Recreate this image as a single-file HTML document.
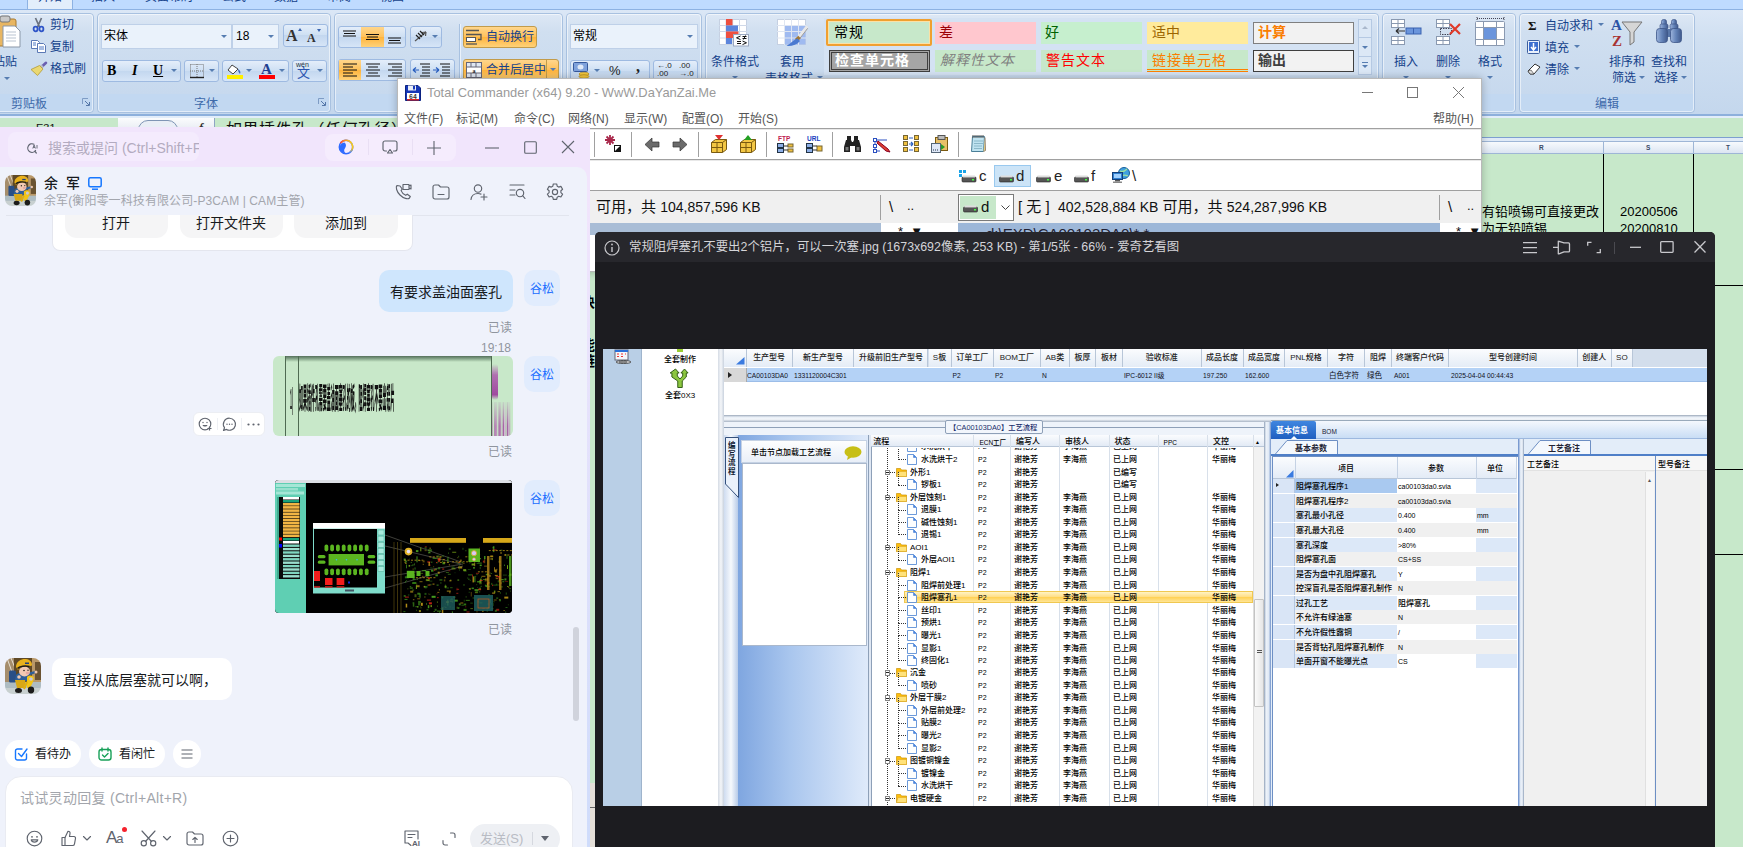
<!DOCTYPE html>
<html lang="zh-CN"><head><meta charset="utf-8"><title>desktop</title>
<style>
*{box-sizing:border-box}
html,body{margin:0;padding:0}
body{width:1743px;height:847px;overflow:hidden;position:relative;background:#c7e8ca;font-family:"Liberation Sans","Noto Sans CJK SC",sans-serif;font-size:12px;color:#000}
.a{position:absolute}
.t{position:absolute;white-space:nowrap;line-height:1}
svg{position:absolute;overflow:visible}
/* excel */
#xl{position:absolute;left:0;top:0;width:1743px;height:847px}
.rgrp{position:absolute;top:13px;height:100px;border:1px solid #a8c1e0;border-radius:4px;background:linear-gradient(#dde8f5 0,#d0dff0 18px,#c7d9ee 80px,#c2d8f1 80px,#c2d8f1 100%)}
.rgrp:after{content:"";position:absolute;left:0;right:0;top:0;bottom:0;border:1px solid rgba(255,255,255,.55);border-radius:3px}
.rlab{position:absolute;bottom:1.500px;left:0;right:0;text-align:center;color:#3e6aaa;font-size:12px;line-height:14px}
.rtx{position:absolute;white-space:nowrap;color:#15428b;font-size:12px;line-height:14px;margin-top:1px}
.rbtn{position:absolute;border:1px solid #9ebae1;border-radius:3px;background:linear-gradient(#e4eefa,#cddff3 50%,#c3d7ef 50%,#d6e5f7)}
.ron{background:linear-gradient(#ffd68c,#ffc15a 50%,#ffb33a 50%,#ffd27a)}
.dd{position:absolute;width:0;height:0;border-left:3px solid transparent;border-right:3px solid transparent;border-top:3px solid #567db1}
/* total commander */
#tc{position:absolute;left:397px;top:78px;width:1085px;height:194px;overflow:hidden;background:#fff;border:1px solid #b9b9b9;box-shadow:0 0 8px rgba(0,0,0,.25)}
#tc .m{position:absolute;top:33px;font-size:12px;color:#555;white-space:nowrap;line-height:14px}
#tc .sep{position:absolute;top:53px;width:1px;height:25px;background:#a0a0a0}
#tc .ico{position:absolute;top:56px}
#tc .dl{position:absolute;top:88px;font-size:15px;color:#222;line-height:18px}
#tc .pt{position:absolute;top:118px;font-size:15px;color:#111;line-height:20px;white-space:nowrap}
/* chat */
#chat{position:absolute;left:0;top:127px;width:590px;height:720px;background:linear-gradient(#f1e5fc 0,#f1e5fc 70px,#cfdcfb 100%);color:#171a1d}
#chat .panel{position:absolute;left:0;top:40px;width:587px;height:690px;background:#eff2fb;border-radius:0 10px 0 0}
#chat .gs{position:absolute;left:524px;width:36px;height:36px;border-radius:10px;background:#e1ecfd;color:#1a6dff;font-size:12px;line-height:38px;text-align:center}
#chat .rd{position:absolute;left:488px;font-size:12px;color:#8f959e;line-height:14px;white-space:nowrap}
#chat .pill{position:absolute;top:613px;height:28px;border-radius:14px;background:#fff}
#chat .ic{fill:none;stroke:#5f646e;stroke-width:1.15;stroke-linecap:round;stroke-linejoin:round}
/* viewer */
#vw{position:absolute;left:595px;top:232px;width:1120px;height:615px;background:#1c1c20;border-radius:5px 5px 0 0}
#vw .tb{position:absolute;left:0;top:0;width:1120px;height:30px;background:#27272c;border-radius:5px 5px 0 0}
#vw .wi{fill:none;stroke:#c8c8cc;stroke-width:1.3}
#img{position:absolute;left:8px;top:117px;width:1104px;height:457px;background:#fff;overflow:hidden;font-size:8px;color:#000;font-weight:500}
#img .t{font-size:8px;line-height:9px}
#img .h{position:absolute;top:0;height:18px;border-right:1px solid #b8c6d8;background:linear-gradient(#fbfcfe,#e4ecf6);text-align:center;font-size:8px;line-height:17px;white-space:nowrap;overflow:hidden;color:#222}
#img .tr{position:absolute;left:268px;width:382px;height:13px;white-space:nowrap}
#img .tr span{position:absolute;top:2px;font-size:8px;line-height:9px}
#img .gr{position:absolute;left:670px;width:244px;height:15px}
#img .gr span{position:absolute;top:3px;font-size:8px;line-height:9px;white-space:nowrap}
#tc .l{font-size:14px}

</style></head>
<body>
<div id="xl">
<!-- tab strip -->
<div class="a" style="left:0;top:0;width:1743px;height:10px;background:#bfdbff"></div>
<div class="a" style="left:27px;top:-14px;width:46px;height:24px;border:1px solid #8db2e3;border-bottom:0;border-radius:3px 3px 0 0;background:#e3eefb"></div>
<div class="t" style="left:38px;top:-9px;font-size:12px;color:#15428b">开始</div>
<div class="t" style="left:91px;top:-9px;font-size:12px;color:#15428b">插入</div>
<div class="t" style="left:145px;top:-9px;font-size:12px;color:#15428b">页面布局</div>
<div class="t" style="left:222px;top:-9px;font-size:12px;color:#15428b">公式</div>
<div class="t" style="left:274px;top:-9px;font-size:12px;color:#15428b">数据</div>
<div class="t" style="left:327px;top:-9px;font-size:12px;color:#15428b">审阅</div>
<div class="t" style="left:380px;top:-9px;font-size:12px;color:#15428b">视图</div>
<!-- ribbon body -->
<div class="a" style="left:0;top:9px;width:1743px;height:105px;background:linear-gradient(#dbe7f6,#cfdff1 30%,#c4d7ed 100%);border-top:1px solid #8db2e3"></div>

<!-- group: clipboard -->
<div class="rgrp" style="left:-6px;width:100px"><div class="rlab" style="left:0;right:30px">剪贴板</div>
 <svg style="left:87px;top:84px" width="9" height="9" viewBox="0 0 9 9"><path d="M0.5 6V0.5H6" fill="none" stroke="#7e9cc5"/><path d="M3 3l4 4M7.5 4v3.5H4" fill="none" stroke="#5577a8"/></svg>
</div>
<!-- paste icon -->
<svg style="left:-6px;top:16px" width="28" height="32" viewBox="0 0 28 32"><rect x="0" y="3" width="22" height="27" rx="2" fill="#e8b662" stroke="#a97a2f"/><rect x="6" y="0" width="10" height="6" rx="2" fill="#c9c9c9" stroke="#777"/><path d="M9 10h12l5 5v16H9z" fill="#fff" stroke="#8a97a8"/><path d="M12 16h10M12 19h10M12 22h10M12 25h10" stroke="#b9c3d0"/></svg>
<div class="rtx" style="left:-7px;top:54px">粘贴</div>
<div class="dd" style="left:4px;top:77px"></div>
<!-- cut copy brush -->
<svg style="left:33px;top:18px" width="11" height="14" viewBox="0 0 11 14"><path d="M2.500 0l4 9M8.500 0l-4 9" stroke="#6b7280" stroke-width="1.700" fill="none"/><ellipse cx="2.600" cy="11" rx="2" ry="2.300" fill="none" stroke="#2f55c8" stroke-width="1.800"/><ellipse cx="8.400" cy="11" rx="2" ry="2.300" fill="none" stroke="#2f55c8" stroke-width="1.800"/></svg>
<div class="rtx" style="left:50px;top:17px">剪切</div>
<svg style="left:31px;top:40px" width="16" height="13" viewBox="0 0 16 13"><path d="M0.5 0.5h6l2 2v6h-8z" fill="#fff" stroke="#5b79b5"/><path d="M6.500 3.500h6l2 2v7h-8z" fill="#fff" stroke="#5b79b5"/><path d="M2 3h3M2 5h3M8 7h5M8 9h5" stroke="#4f78c4"/></svg>
<div class="rtx" style="left:50px;top:39px">复制</div>
<svg style="left:31px;top:62px" width="16" height="14" viewBox="0 0 16 14"><path d="M15 .8L10.500 5" stroke="#6a5fb0" stroke-width="2.600" stroke-linecap="round"/><path d="M11.500 3.500l-2.500 2.500" stroke="#b8bcc8" stroke-width="3.200"/><path d="M8.500 3.500l3.500 3.500-5.500 6.500L0 7.500z" fill="#ead872" stroke="#b39a36" stroke-width=".8"/></svg>
<div class="rtx" style="left:50px;top:61px">格式刷</div>

<!-- group: font -->
<div class="rgrp" style="left:97px;width:234px"><div class="rlab" style="right:16px">字体</div>
 <svg style="left:220px;top:84px" width="9" height="9" viewBox="0 0 9 9"><path d="M0.5 6V0.5H6" fill="none" stroke="#7e9cc5"/><path d="M3 3l4 4M7.5 4v3.5H4" fill="none" stroke="#5577a8"/></svg>
</div>
<div class="a" style="left:101px;top:24px;width:131px;height:25px;background:#eaf2fb;border:1px solid #bed0e8"></div>
<div class="a" style="left:232px;top:24px;width:47px;height:25px;background:#eaf2fb;border:1px solid #bed0e8"></div>
<div class="t" style="left:104px;top:30px;font-size:12px">宋体</div>
<div class="dd" style="left:221px;top:35px"></div>
<div class="t" style="left:236px;top:30px;font-size:12px">18</div>
<div class="dd" style="left:268px;top:35px"></div>
<div class="rbtn" style="left:283px;top:24px;width:45px;height:23px"></div>
<div class="t" style="left:286px;top:27px;font:bold 16px 'Liberation Serif',serif;color:#333">A</div>
<div class="t" style="left:307px;top:31px;font:bold 12px 'Liberation Serif',serif;color:#333">A</div>
<div class="a" style="left:298px;top:28px;border-left:2.5px solid transparent;border-right:2.5px solid transparent;border-bottom:3px solid #3c66b0"></div>
<div class="a" style="left:317px;top:29px;border-left:2.5px solid transparent;border-right:2.5px solid transparent;border-top:3px solid #3c66b0"></div>
<div class="rbtn" style="left:102px;top:60px;width:79px;height:22px"></div>
<div class="t" style="left:107px;top:63px;font:bold 14px 'Liberation Serif',serif">B</div>
<div class="t" style="left:132px;top:63px;font:italic bold 14px 'Liberation Serif',serif">I</div>
<div class="t" style="left:153px;top:63px;font:bold 14px 'Liberation Serif',serif;text-decoration:underline">U</div>
<div class="dd" style="left:171px;top:69px"></div>
<div class="rbtn" style="left:184px;top:60px;width:35px;height:22px"></div>
<svg style="left:190px;top:64px" width="14" height="14" viewBox="0 0 14 14"><path d="M0.5 0.500h13v13M0.500 0.500v13M7 0v13M0 7h13" stroke="#777" stroke-dasharray="1 1" fill="none"/><path d="M0 13.500h14" stroke="#222" stroke-width="1.400"/></svg>
<div class="dd" style="left:209px;top:69px"></div>
<div class="rbtn" style="left:222px;top:60px;width:67px;height:22px"></div>
<svg style="left:227px;top:62px" width="16" height="17" viewBox="0 0 16 17"><path d="M5 3l6 4-5 5-5-4z" fill="#fff" stroke="#444"/><path d="M11 7c2 1 3 3 2 5-1-1-2-3-2-5z" fill="#3a67c0"/><rect x="0" y="13" width="16" height="4" fill="#ffef00"/></svg>
<div class="dd" style="left:246px;top:69px"></div>
<div class="t" style="left:261px;top:61px;font:bold 15px 'Liberation Serif',serif;color:#1f3f8f">A</div>
<div class="a" style="left:259px;top:75px;width:16px;height:4px;background:#f00"></div>
<div class="dd" style="left:279px;top:69px"></div>
<div class="rbtn" style="left:292px;top:60px;width:35px;height:22px"></div>
<div class="t" style="left:296px;top:61px;font-size:7px;color:#234">wén</div>
<div class="t" style="left:297px;top:66px;font-size:13px;color:#2a55b0">文</div>
<div class="dd" style="left:317px;top:69px"></div>

<!-- group: alignment -->
<div class="rgrp" style="left:334px;width:229px"></div>
<div class="rbtn" style="left:338px;top:26px;width:68px;height:22px"></div>
<div class="a ron" style="left:361px;top:27px;width:23px;height:20px"></div>
<svg style="left:343px;top:30px" width="60" height="14" viewBox="0 0 60 14"><path d="M0 1h13M1 3.500h11M0 6h13" stroke="#111" stroke-width="1.200"/><path d="M23 4.500h13M24 7h11M23 9.500h13" stroke="#111" stroke-width="1.200"/><path d="M45 8h13M46 10.500h11M45 13h13" stroke="#111" stroke-width="1.200"/></svg>
<div class="rbtn" style="left:410px;top:26px;width:32px;height:22px"></div>
<svg style="left:414px;top:29px" width="16" height="16" viewBox="0 0 16 16"><path d="M1 12L12 3M12 3l-4 .5M12 3l-.5 4" stroke="#555" fill="none" stroke-width="1.200"/><path d="M2 6l4 4M4 4l4 4M6 2l4 4" stroke="#222" stroke-width="1.200"/></svg>
<div class="dd" style="left:432px;top:35px"></div>
<div class="a" style="left:459px;top:24px;width:1px;height:58px;background:#a8c1e0"></div>
<div class="a" style="left:460px;top:24px;width:1px;height:58px;background:#eaf2fb"></div>
<div class="rbtn ron" style="left:463px;top:26px;width:74px;height:22px;border-color:#c29b4a"></div>
<svg style="left:466px;top:29px" width="17" height="16" viewBox="0 0 17 16"><path d="M0 1.500h13M0 5.500h15v5h-3" stroke="#555" fill="none" stroke-width="1.300"/><rect x="0.500" y="8.500" width="9" height="4" fill="#fff" stroke="#555"/><path d="M0 15h11" stroke="#555" stroke-width="1.300"/></svg>
<div class="rtx" style="left:486px;top:29px">自动换行</div>
<div class="rbtn" style="left:338px;top:59px;width:68px;height:22px"></div>
<div class="a ron" style="left:339px;top:60px;width:22px;height:20px"></div>
<svg style="left:343px;top:63px" width="60" height="14" viewBox="0 0 60 14"><path d="M0 1h14M0 4h10M0 7h14M0 10h10M0 13h14" stroke="#111" stroke-width="1.200"/><path d="M23 1h14M25 4h10M23 7h14M25 10h10M23 13h14" stroke="#111" stroke-width="1.200"/><path d="M45 1h14M49 4h10M45 7h14M49 10h10M45 13h14" stroke="#111" stroke-width="1.200"/></svg>
<div class="rbtn" style="left:410px;top:59px;width:45px;height:22px"></div>
<svg style="left:413px;top:63px" width="40" height="14" viewBox="0 0 40 14"><path d="M7 1h10M9 4h8M9 7h8M9 10h8M7 13h10" stroke="#111" stroke-width="1.200"/><path d="M0 7h6M0 7l3-2.500M0 7l3 2.500" stroke="#2a5fc0" stroke-width="1.200" fill="none"/><path d="M27 1h10M29 4h8M29 7h8M29 10h8M27 13h10" stroke="#111" stroke-width="1.200"/><path d="M20 7h6M26 7l-3-2.500M26 7l-3 2.500" stroke="#2a5fc0" stroke-width="1.200" fill="none"/></svg>
<div class="rbtn ron" style="left:463px;top:59px;width:96px;height:22px;border-color:#c29b4a"></div>
<svg style="left:466px;top:62px" width="16" height="16" viewBox="0 0 16 16"><rect x="0.500" y="0.500" width="15" height="15" fill="#dfe7f3" stroke="#667"/><rect x="0.500" y="5" width="15" height="6" fill="#fff" stroke="#667"/><path d="M5 0v5M10 0v5M5 11v5M10 11v5" stroke="#667"/><text x="8" y="10.500" font-size="6" font-weight="bold" text-anchor="middle" font-family="Liberation Serif,serif" fill="#222">a</text></svg>
<div class="rtx" style="left:486px;top:62px">合并后居中</div>
<div class="a" style="left:546px;top:60px;width:1px;height:20px;background:#c29b4a"></div>
<div class="dd" style="left:550px;top:68px"></div>

<!-- group: number -->
<div class="rgrp" style="left:566px;width:136px"></div>
<div class="a" style="left:570px;top:24px;width:128px;height:25px;background:#eaf2fb;border:1px solid #bed0e8"></div>
<div class="t" style="left:573px;top:30px;font-size:12px">常规</div>
<div class="dd" style="left:687px;top:35px"></div>
<div class="rbtn" style="left:570px;top:60px;width:80px;height:22px"></div>
<svg style="left:573px;top:62px" width="18" height="18" viewBox="0 0 18 18"><rect x="0.500" y="0.500" width="14" height="9" rx="1" fill="#7fa2dc" stroke="#35589b"/><ellipse cx="7.500" cy="5" rx="3" ry="2.500" fill="#dfe9f8"/><ellipse cx="11" cy="12" rx="5" ry="1.800" fill="#f2c63c" stroke="#a87e12" stroke-width=".6"/><ellipse cx="11" cy="14.500" rx="5" ry="1.800" fill="#f2c63c" stroke="#a87e12" stroke-width=".6"/></svg>
<div class="dd" style="left:594px;top:69px"></div>
<div class="t" style="left:609px;top:64px;font-size:13px;color:#222">%</div>
<div class="t" style="left:636px;top:58px;font:bold 16px 'Liberation Serif',serif;color:#222">,</div>
<div class="rbtn" style="left:653px;top:60px;width:45px;height:22px"></div>
<div class="t" style="left:657px;top:62px;font-size:8px;color:#222;line-height:8px">←.0<br>.00</div>
<div class="t" style="left:679px;top:62px;font-size:8px;color:#222;line-height:8px">.00<br>→.0</div>

<!-- group: styles -->
<div class="rgrp" style="left:705px;width:674px"></div>
<svg style="left:719px;top:19px" width="31" height="28" viewBox="0 0 31 28"><rect x="0.500" y="0.500" width="27" height="25" fill="#fff" stroke="#c5d0e2"/><path d="M7 0v26M13.700 0v26M20.500 0v26M0 6.500h28M0 12.500h28M0 19h28" stroke="#cfd8e8" stroke-width="1"/><rect x="7" y="0" width="6.500" height="6.500" fill="#ee4f3f"/><rect x="7" y="6.500" width="12" height="6" fill="#5c85dc"/><rect x="7" y="12.500" width="12.500" height="6.500" fill="#ee4f3f"/><rect x="7" y="19" width="6" height="6" fill="#5c85dc"/><rect x="14.500" y="15.500" width="15" height="11.500" fill="#fbfcfe" stroke="#9aa8c0"/><path d="M21.500 17l-4 1.800 4 1.800M18 22.500h4M18 24.500h4M23.500 22l4 1.800-4 1.800M23.500 17.500h4M23.500 19.500h4M26.500 16.500l-2 4" stroke="#111" fill="none" stroke-width="1"/></svg>
<div class="rtx" style="left:711px;top:54px">条件格式</div>
<div class="dd" style="left:732px;top:76px"></div>
<svg style="left:777px;top:19px" width="32" height="28" viewBox="0 0 32 28"><rect x="0.500" y="0.500" width="28" height="25" fill="#fff" stroke="#c5d0e2"/><rect x="7.500" y="6.500" width="21" height="19" fill="#9fbaf0"/><path d="M7.500 0v26M14.500 0v26M21.500 0v26M0 6.500h29M0 12.500h29M0 19h29" stroke="#dfe6f2" stroke-width="1"/><path d="M29.500 8.500L21 19.500" stroke="#e8e8e8" stroke-width="3.200" stroke-linecap="round"/><path d="M29.500 8.500L21 19.500" stroke="#9a9a9a" stroke-width="1" transform="translate(1.200,.8)"/><path d="M22.500 18l-3.300 3.300" stroke="#a07838" stroke-width="3.600"/><path d="M20.500 19.500c-3.500 1-6 4.500-11 7.500 5 .5 10.500-1 13.500-5z" fill="#4a79d0"/></svg>
<div class="rtx" style="left:780px;top:54px">套用</div>
<div class="rtx" style="left:765px;top:71px">表格格式</div>
<div class="dd" style="left:817px;top:76px"></div>
<!-- gallery -->
<div class="a" style="left:824px;top:18px;width:535px;height:57px;background:#d4e2f3"></div>
<div class="a" style="left:935px;top:50px;width:101px;height:22px;background:#c7e8ca"></div>
<div class="a" style="left:1041px;top:50px;width:101px;height:22px;background:#c7e8ca"></div>
<div class="a" style="left:1147px;top:50px;width:101px;height:22px;background:#c7e8ca"></div>
<div class="a" style="left:826px;top:19px;width:106px;height:27px;border:2px solid #f0a030;border-radius:2px;background:#c7e8ca;box-shadow:inset 0 0 0 1px #fbe1a6"></div>
<div class="t" style="left:834px;top:25px;font-size:14px;color:#000;letter-spacing:1px">常规</div>
<div class="a" style="left:935px;top:22px;width:101px;height:22px;background:#ffc7ce"></div>
<div class="t" style="left:939px;top:25px;font-size:14px;color:#9c0006">差</div>
<div class="a" style="left:1041px;top:22px;width:101px;height:22px;background:#c6efce"></div>
<div class="t" style="left:1045px;top:25px;font-size:14px;color:#006100">好</div>
<div class="a" style="left:1147px;top:22px;width:101px;height:22px;background:#ffeb9c"></div>
<div class="t" style="left:1152px;top:25px;font-size:14px;color:#9c6500">适中</div>
<div class="a" style="left:1253px;top:22px;width:101px;height:22px;background:#f2f2f2;border:1px solid #7f7f7f"></div>
<div class="t" style="left:1258px;top:25px;font-size:14px;color:#fa7d00;font-weight:bold">计算</div>
<div class="a" style="left:829px;top:50px;width:101px;height:22px;background:#a5a5a5;border:3px double #3f3f3f"></div>
<div class="t" style="left:835px;top:53px;font-size:14px;color:#fff;font-weight:bold;letter-spacing:1px">检查单元格</div>
<div class="t" style="left:940px;top:53px;font-size:14px;color:#7f7f7f;font-style:italic;letter-spacing:1px">解释性文本</div>
<div class="t" style="left:1046px;top:53px;font-size:14px;color:#f00;letter-spacing:1px">警告文本</div>
<div class="t" style="left:1152px;top:53px;font-size:14px;color:#fa7d00;letter-spacing:1px">链接单元格</div>
<div class="a" style="left:1147px;top:69px;width:101px;height:3px;border-top:1px solid #ff8001;border-bottom:1px solid #ff8001"></div>
<div class="a" style="left:1253px;top:50px;width:101px;height:22px;background:#f2f2f2;border:1px solid #3f3f3f"></div>
<div class="t" style="left:1258px;top:53px;font-size:14px;color:#3f3f3f;font-weight:bold">输出</div>
<div class="a" style="left:1358px;top:19px;width:14px;height:56px;border:1px solid #b5c9e3;background:#dce8f6"></div>
<div class="a" style="left:1358px;top:37px;width:14px;height:1px;background:#b5c9e3"></div>
<div class="a" style="left:1358px;top:56px;width:14px;height:1px;background:#b5c9e3"></div>
<div class="a" style="left:1362px;top:26px;border-left:3px solid transparent;border-right:3px solid transparent;border-bottom:3px solid #a9b8cc"></div>
<div class="dd" style="left:1362px;top:46px"></div>
<div class="a" style="left:1362px;top:62px;width:6px;height:1px;background:#567db1"></div>
<div class="dd" style="left:1362px;top:65px"></div>

<!-- group: cells -->
<div class="rgrp" style="left:1382px;width:134px"></div>
<svg style="left:1391px;top:19px" width="31" height="27" viewBox="0 0 31 27"><rect x="0.500" y="0.500" width="13" height="8" fill="#fff" stroke="#8a99b0"/><path d="M7 0v9M0 4.500h14" stroke="#8a99b0"/><rect x="0.500" y="17.500" width="13" height="8" fill="#fff" stroke="#8a99b0"/><path d="M7 17v9M0 21.500h14" stroke="#8a99b0"/><rect x="15" y="9" width="15" height="6" fill="#6b95dc" stroke="#3a62b0"/><path d="M22.500 9v6" stroke="#3a62b0"/><path d="M5 12h9M5 12l3-2.500M5 12l3 2.500" stroke="#333" fill="none" stroke-width="1.200"/></svg>
<div class="rtx" style="left:1394px;top:54px">插入</div>
<div class="dd" style="left:1403px;top:76px"></div>
<svg style="left:1436px;top:19px" width="26" height="27" viewBox="0 0 26 27"><rect x="0.500" y="0.500" width="13" height="8" fill="#fff" stroke="#8a99b0"/><path d="M7 0v9M0 4.500h14" stroke="#8a99b0"/><rect x="0.500" y="17.500" width="13" height="8" fill="#fff" stroke="#8a99b0"/><path d="M7 17v9M0 21.500h14" stroke="#8a99b0"/><rect x="4.500" y="9.500" width="11" height="6" fill="none" stroke="#445" stroke-dasharray="1.500 1"/><path d="M14 5l10 10M24 5L14 15" stroke="#e03a2a" stroke-width="2.200"/></svg>
<div class="rtx" style="left:1436px;top:54px">删除</div>
<div class="dd" style="left:1445px;top:76px"></div>
<svg style="left:1475px;top:17px" width="31" height="30" viewBox="0 0 31 30"><path d="M2 1.500h27M2 0v3M29 0v3" stroke="#445" stroke-dasharray="1 1"/><rect x="0.500" y="4.500" width="29" height="24" rx="1" fill="#fff" stroke="#8a99b0"/><path d="M8.500 4v25M21.500 4v25M0 10.500h30M0 22.500h30" stroke="#8a99b0"/><rect x="9" y="11" width="12" height="11" fill="#6b95dc"/></svg>
<div class="rtx" style="left:1478px;top:54px">格式</div>
<div class="dd" style="left:1487px;top:76px"></div>

<!-- group: edit -->
<div class="rgrp" style="left:1519px;width:176px"><div class="rlab">编辑</div></div>
<div class="t" style="left:1528px;top:18px;font:bold 13px 'Liberation Serif',serif;color:#111">Σ</div>
<div class="rtx" style="left:1545px;top:18px">自动求和</div>
<div class="dd" style="left:1598px;top:23px"></div>
<svg style="left:1527px;top:40px" width="13" height="14" viewBox="0 0 13 14"><rect x="0.500" y="0.500" width="12" height="13" rx="1" fill="#e9f0fb" stroke="#3c5f9f"/><rect x="2" y="2" width="9" height="9" fill="#3d6fd0"/><path d="M6.500 3v6M4 7l2.500 3L9 7" stroke="#fff" fill="none" stroke-width="1.500"/></svg>
<div class="rtx" style="left:1545px;top:40px">填充</div>
<div class="dd" style="left:1574px;top:45px"></div>
<svg style="left:1527px;top:63px" width="14" height="12" viewBox="0 0 14 12"><path d="M1 8l7-7 5 3-6 7H3z" fill="#fff" stroke="#333"/><path d="M1 8l2 3h4l-3-4z" fill="#ddd" stroke="#333" stroke-width=".6"/></svg>
<div class="rtx" style="left:1545px;top:62px">清除</div>
<div class="dd" style="left:1574px;top:67px"></div>
<svg style="left:1611px;top:17px" width="32" height="30" viewBox="0 0 32 30"><text x="0" y="13" font-family="Liberation Serif,serif" font-weight="bold" font-size="15" fill="#2b53a5">A</text><text x="1" y="29" font-family="Liberation Serif,serif" font-weight="bold" font-size="15" fill="#a83232">Z</text><path d="M11 5h20l-8 10v10l-4 3V15z" fill="#d6d6d6" stroke="#777"/></svg>
<div class="rtx" style="left:1609px;top:54px">排序和</div>
<div class="rtx" style="left:1612px;top:70px">筛选</div>
<div class="dd" style="left:1639px;top:76px"></div>
<svg style="left:1655px;top:19px" width="28" height="26" viewBox="0 0 28 26"><defs><linearGradient id="bn" x1="0" y1="0" x2="1" y2="0"><stop offset="0" stop-color="#9db4dc"/><stop offset=".5" stop-color="#6383b8"/><stop offset="1" stop-color="#40598c"/></linearGradient></defs><rect x="6.500" y="0.500" width="5" height="6" rx="2" fill="url(#bn)" stroke="#3c5588" stroke-width=".7"/><rect x="16.500" y="0.500" width="5" height="6" rx="2" fill="url(#bn)" stroke="#3c5588" stroke-width=".7"/><rect x="5" y="5" width="8" height="5" rx="1.500" fill="url(#bn)" stroke="#3c5588" stroke-width=".7"/><rect x="15" y="5" width="8" height="5" rx="1.500" fill="url(#bn)" stroke="#3c5588" stroke-width=".7"/><rect x="11" y="10" width="6" height="8" fill="#5876a8"/><rect x="1.500" y="9.500" width="11" height="14" rx="3" fill="url(#bn)" stroke="#3c5588" stroke-width=".8"/><rect x="15.500" y="9.500" width="11" height="14" rx="3" fill="url(#bn)" stroke="#3c5588" stroke-width=".8"/></svg>
<div class="rtx" style="left:1651px;top:54px">查找和</div>
<div class="rtx" style="left:1654px;top:70px">选择</div>
<div class="dd" style="left:1681px;top:76px"></div>

<!-- formula bar row -->
<div class="a" style="left:0;top:114px;width:1743px;height:2px;background:#8db0dc"></div>
<div class="a" style="left:0;top:116px;width:1743px;height:2px;background:#e2edfa"></div>
<div class="a" style="left:0;top:118px;width:1743px;height:20px;background:#c7e8ca"></div>
<div class="a" style="left:118px;top:118px;width:97px;height:14px;background:linear-gradient(#fbfcfd,#e4e9f1)"></div>
<div class="a" style="left:138px;top:120px;width:40px;height:20px;border:1px solid #7f95b5;border-radius:10px;background:#e9eef6"></div>
<div class="t" style="left:36px;top:123px;font-size:11px;color:#111">E31</div>
<div class="t" style="left:199px;top:121px;font:italic bold 12px 'Liberation Serif',serif;color:#333">f</div>
<div class="a" style="left:214px;top:118px;width:1px;height:14px;background:#8fa5c4"></div>
<div class="t" style="left:226px;top:122px;font-size:16px;color:#111;letter-spacing:.5px">如果插件孔（任何孔径）处</div>

<!-- sheet right side -->
<div class="a" style="left:1481px;top:137px;width:262px;height:1px;background:#7d9fd0"></div>
<div class="a" style="left:1481px;top:138px;width:262px;height:3px;background:#dfeaf7"></div>
<div class="a" style="left:1481px;top:141px;width:262px;height:13px;background:linear-gradient(#f7fafd,#dbe5f2);border-top:1px solid #9eb6d6;border-bottom:1px solid #9eb6d6"></div>
<div class="t" style="left:1539px;top:145px;font-size:6.500px;color:#3a4a66;font-weight:bold">R</div>
<div class="t" style="left:1646px;top:145px;font-size:6.500px;color:#3a4a66;font-weight:bold">S</div>
<div class="t" style="left:1726px;top:145px;font-size:6.500px;color:#3a4a66;font-weight:bold">T</div>
<div class="a" style="left:1603px;top:141px;width:1px;height:13px;background:#9eb6d6"></div>
<div class="a" style="left:1693px;top:141px;width:1px;height:13px;background:#9eb6d6"></div>
<div class="a" style="left:1603px;top:154px;width:1px;height:693px;background:#000"></div>
<div class="a" style="left:1693px;top:154px;width:1px;height:693px;background:#000"></div>
<div class="a" style="left:1481px;top:285px;width:262px;height:1px;background:#000"></div>
<div class="a" style="left:1481px;top:469px;width:262px;height:1px;background:#000"></div>
<div class="a" style="left:1481px;top:554px;width:262px;height:1px;background:#000"></div>
<div class="t" style="left:1482px;top:205px;font-size:13px;color:#000">有铅喷锡可直接更改</div>
<div class="t" style="left:1482px;top:222px;font-size:13px;color:#000">为无铅喷锡</div>
<div class="t" style="left:1620px;top:205px;font-size:13px;color:#000">20200506</div>
<div class="t" style="left:1620px;top:222px;font-size:13px;color:#000">20200810</div>
<!-- left strip between chat and viewer -->
<div class="a" style="left:590px;top:290px;width:6px;height:80px;overflow:hidden"><div class="t" style="left:-9px;top:5px;font-size:14px;font-weight:bold">块</div><div class="t" style="left:-9px;top:48px;font-size:14px;font-weight:bold">能</div><div class="t" style="left:-9px;top:64px;font-size:14px;font-weight:bold">链</div></div>
<div class="a" style="left:590px;top:783px;width:6px;height:64px;background:#e4dfd8"></div>
<div class="a" style="left:590px;top:807px;width:6px;height:1px;background:#666"></div>
</div>
<div id="tc">
<svg style="left:7px;top:6px" width="16" height="16" viewBox="0 0 16 16"><path d="M0.500 0.500h12.500l2.500 2.500v12.500h-15z" fill="#1637b8" stroke="#0b2280"/><rect x="3" y="0.500" width="8" height="5" fill="#e9eef8"/><rect x="8" y="1" width="2" height="3.500" fill="#1637b8"/><rect x="2" y="8" width="12" height="7" fill="#fff"/><rect x="2" y="14" width="12" height="1.500" fill="#d22"/><text x="8" y="13.500" font-size="6.500" font-weight="bold" text-anchor="middle" font-family="Liberation Mono,monospace" fill="#333">64</text></svg>
<div class="t" style="left:29px;top:8px;font-size:12.900px;color:#9a9a9a">Total Commander (x64) 9.20 - WwW.DaYanZai.Me</div>
<svg style="left:964px;top:13px" width="11" height="1" viewBox="0 0 11 1"><path d="M0 .5h11" stroke="#777"/></svg>
<svg style="left:1009px;top:8px" width="11" height="11" viewBox="0 0 11 11"><rect x=".5" y=".5" width="10" height="10" fill="none" stroke="#777"/></svg>
<svg style="left:1055px;top:8px" width="11" height="11" viewBox="0 0 11 11"><path d="M0 0l11 11M11 0L0 11" stroke="#777"/></svg>
<div class="m" style="left:6px">文件(F)</div>
<div class="m" style="left:58px">标记(M)</div>
<div class="m" style="left:116px">命令(C)</div>
<div class="m" style="left:170px">网络(N)</div>
<div class="m" style="left:226px">显示(W)</div>
<div class="m" style="left:284px">配置(O)</div>
<div class="m" style="left:340px">开始(S)</div>
<div class="m" style="left:1035px">帮助(H)</div>
<div class="a" style="left:0;top:49px;width:1083px;height:1px;background:#a0a0a0"></div>
<div class="a" style="left:0;top:50px;width:1083px;height:1px;background:#e8e8e8"></div>
<!-- toolbar -->
<div class="sep" style="left:196px"></div>
<svg class="ico" style="left:207px" width="16" height="18" viewBox="0 0 16 18"><path d="M5 0v10M0 5h10M1.500 1.500l7 7M8.500 1.500l-7 7" stroke="#a8274a" stroke-width="1.800"/><rect x="9.500" y="10.500" width="6" height="6" fill="#fff" stroke="#111"/><path d="M10 16l5-5v5z" fill="#111"/></svg>
<div class="sep" style="left:233px"></div>
<svg class="ico" style="left:247px;top:59px" width="14" height="13" viewBox="0 0 14 13"><path d="M0 6.500L7 0v4h7v5H7v4z" fill="#6b6b6b" stroke="#333" stroke-width=".7"/></svg>
<svg class="ico" style="left:275px;top:59px" width="14" height="13" viewBox="0 0 14 13"><path d="M14 6.500L7 0v4H0v5h7v4z" fill="#6b6b6b" stroke="#333" stroke-width=".7"/></svg>
<div class="sep" style="left:300px"></div>
<svg class="ico" style="left:313px" width="16" height="18" viewBox="0 0 16 18"><path d="M0.500 7.500l4-3h11v10l-4 3h-11z" fill="#f3c744" stroke="#7a5a10"/><path d="M0.500 7.500h11v10M11.500 7.500l4-3M6 7.500v10M0.500 12.500h11" stroke="#7a5a10" fill="none"/><path d="M4 0h8l-4 5z" fill="#e03030"/></svg>
<svg class="ico" style="left:342px" width="16" height="18" viewBox="0 0 16 18"><path d="M0.500 7.500l4-3h11v10l-4 3h-11z" fill="#f3c744" stroke="#7a5a10"/><path d="M0.500 7.500h11v10M11.500 7.500l4-3M6 7.500v10M0.500 12.500h11" stroke="#7a5a10" fill="none"/><path d="M4 5h8L8 0z" fill="#22a022"/></svg>
<div class="sep" style="left:368px"></div>
<svg class="ico" style="left:379px" width="18" height="18" viewBox="0 0 18 18"><text x="1" y="6" font-size="6.500" font-weight="bold" font-family="Liberation Sans,sans-serif" fill="#c02050">FTP</text><rect x="0.500" y="8.500" width="6" height="4" fill="#8fb0e8" stroke="#234"/><rect x="0.500" y="13.500" width="6" height="4" fill="#8fb0e8" stroke="#234"/><rect x="11" y="9" width="5" height="3" fill="#f0c040" stroke="#763"/><rect x="11" y="14" width="5" height="3" fill="#f0c040" stroke="#763"/><path d="M7 11h4M7 15h4" stroke="#333"/></svg>
<svg class="ico" style="left:408px" width="18" height="18" viewBox="0 0 18 18"><text x="1" y="6" font-size="6.500" font-weight="bold" font-family="Liberation Sans,sans-serif" fill="#2040c0">URL</text><rect x="0.500" y="8.500" width="6" height="4" fill="#8fb0e8" stroke="#234"/><rect x="0.500" y="13.500" width="6" height="4" fill="#8fb0e8" stroke="#234"/><rect x="11" y="11" width="5" height="5" fill="#f0c040" stroke="#763"/><path d="M7 11h4M7 15h4" stroke="#333"/></svg>
<div class="sep" style="left:434px"></div>
<svg class="ico" style="left:446px;top:57px" width="17" height="16" viewBox="0 0 17 16"><rect x="3" y="0" width="4" height="5" fill="#222"/><rect x="10" y="0" width="4" height="5" fill="#222"/><path d="M2 4h5l1 2h1l1-2h5l2 7v5h-6v-6H6v6H0v-5z" fill="#222"/><rect x="1.500" y="11" width="3" height="3.500" fill="#777"/><rect x="12.500" y="11" width="3" height="3.500" fill="#777"/></svg>
<svg class="ico" style="left:475px" width="18" height="18" viewBox="0 0 18 18"><rect x="0.500" y="3.500" width="3" height="3" fill="#fff" stroke="#2a4fc0"/><rect x="0.500" y="9.500" width="3" height="3" fill="#fff" stroke="#2a4fc0"/><rect x="0.500" y="14.500" width="3" height="3" fill="#fff" stroke="#2a4fc0"/><path d="M2 6v3M2 12v3M4 5h10M4 16h3" stroke="#2a4fc0"/><path d="M5 6l10 8 2 3-4-1-9-8z" fill="#e04030" stroke="#802"/></svg>
<svg class="ico" style="left:505px" width="17" height="18" viewBox="0 0 17 18"><g fill="#f0c040" stroke="#763"><rect x="0.500" y="0.500" width="4" height="4"/><rect x="11.500" y="0.500" width="4" height="4"/><rect x="0.500" y="6.500" width="4" height="4"/><rect x="11.500" y="6.500" width="4" height="4"/><rect x="0.500" y="12.500" width="4" height="4"/><rect x="11.500" y="12.500" width="4" height="4"/></g><path d="M6 3h4M6 9h4M6 15h4M10 9l-2-2M10 9l-2 2" stroke="#2a5fc0" stroke-width="1.200" fill="none"/></svg>
<svg class="ico" style="left:533px" width="18" height="18" viewBox="0 0 18 18"><rect x="4.500" y="2.500" width="12" height="13" fill="#e8c068" stroke="#7a5a10"/><rect x="7" y="0.500" width="7" height="4" fill="#bbb" stroke="#555"/><rect x="0.500" y="8.500" width="9" height="9" fill="#dfe8f8" stroke="#567"/><path d="M2 15h1M4 15h1M6 15h1" stroke="#234"/><path d="M10 9l4 3-4 3z" fill="#2a9a2a"/></svg>
<div class="sep" style="left:560px"></div>
<svg class="ico" style="left:572px" width="17" height="18" viewBox="0 0 17 18"><path d="M2.500 1.500h12l-1 15h-12z" fill="#bfe3f0" stroke="#4a7f98"/><path d="M3 0v3M5 0v3M7 0v3M9 0v3M11 0v3M13 0v3" stroke="#555"/><path d="M4 6h9M4 8.500h9M4 11h8M4 13.500h8" stroke="#8ab7c8"/><path d="M13.500 16.500l2-1-0.500-13" fill="#e8d080" stroke="#987"/></svg>
<div class="a" style="left:0;top:80px;width:1083px;height:1px;background:#a0a0a0"></div>
<div class="a" style="left:0;top:81px;width:1083px;height:1px;background:#e8e8e8"></div>
<!-- drive bar -->
<div class="a" style="left:596px;top:86px;width:37px;height:22px;background:#cce4f7;border:1px solid #99c9ef"></div>
<svg style="left:561px;top:91px" width="17" height="14" viewBox="0 0 17 14"><rect x="3" y="7" width="14" height="5" rx="1" fill="#555" stroke="#222" stroke-width=".6"/><rect x="4" y="5.500" width="12" height="2" fill="#ddd"/><rect x="13" y="9" width="2" height="1.500" fill="#4f4"/><rect x="0" y="0" width="3" height="3" fill="#19a3e8"/><rect x="4" y="0" width="3" height="3" fill="#19a3e8"/><rect x="0" y="4" width="3" height="3" fill="#19a3e8"/></svg>
<div class="dl" style="left:581px">c</div>
<svg style="left:601px;top:96px" width="15" height="8" viewBox="0 0 15 8"><rect x="0.500" y="2" width="14" height="5" rx="1" fill="#555" stroke="#222" stroke-width=".6"/><rect x="1.500" y="0.500" width="12" height="2" fill="#ddd"/><rect x="11" y="4" width="2" height="1.500" fill="#4f4"/></svg>
<div class="dl" style="left:618px">d</div>
<svg style="left:638px;top:96px" width="15" height="8" viewBox="0 0 15 8"><rect x="0.500" y="2" width="14" height="5" rx="1" fill="#555" stroke="#222" stroke-width=".6"/><rect x="1.500" y="0.500" width="12" height="2" fill="#ddd"/><rect x="11" y="4" width="2" height="1.500" fill="#4f4"/></svg>
<div class="dl" style="left:656px">e</div>
<svg style="left:676px;top:96px" width="15" height="8" viewBox="0 0 15 8"><rect x="0.500" y="2" width="14" height="5" rx="1" fill="#555" stroke="#222" stroke-width=".6"/><rect x="1.500" y="0.500" width="12" height="2" fill="#ddd"/><rect x="11" y="4" width="2" height="1.500" fill="#4f4"/></svg>
<div class="dl" style="left:693px">f</div>
<svg style="left:714px;top:88px" width="18" height="17" viewBox="0 0 18 17"><circle cx="12" cy="6" r="5.500" fill="#3fa0e0" stroke="#17609a"/><path d="M8 4c2 1 5 0 7-2M9 9c2-1 5-1 7 0" stroke="#9fe09f" fill="none" stroke-width="1.300"/><rect x="0.500" y="5.500" width="10" height="7" fill="#2f7fd0" stroke="#123f7a"/><rect x="2" y="7" width="7" height="4" fill="#9fd0ff"/><rect x="3" y="13" width="5" height="1.500" fill="#555"/><rect x="1" y="14.500" width="9" height="1.500" fill="#888"/></svg>
<div class="dl" style="left:734px">\</div>
<div class="a" style="left:0;top:111px;width:1083px;height:1px;background:#a0a0a0"></div>
<!-- path bar -->
<div class="a" style="left:0;top:112px;width:1083px;height:32px;background:#f0f0f0"></div>
<div class="pt" style="left:198px">可用，共 <span class="l">104,857,596 KB</span></div>
<div class="a" style="left:482px;top:116px;width:1px;height:25px;background:#a0a0a0"></div>
<div class="pt" style="left:491px">\</div><div class="pt" style="left:509px;top:117px;font-size:13px">..</div>
<div class="a" style="left:560px;top:115px;width:56px;height:27px;background:#fff;border:1px solid #7a7a7a"></div>
<div class="a" style="left:562px;top:117px;width:36px;height:23px;background:#c7e8ca"></div>
<svg style="left:565px;top:126px" width="15" height="8" viewBox="0 0 15 8"><rect x="0.500" y="2" width="14" height="5" rx="1" fill="#555" stroke="#222" stroke-width=".6"/><rect x="1.500" y="0.500" width="12" height="2" fill="#ddd"/><rect x="11" y="4" width="2" height="1.500" fill="#4f4"/></svg>
<div class="pt" style="left:583px">d</div>
<svg style="left:603px;top:126px" width="9" height="6" viewBox="0 0 9 6"><path d="M0.500 0.500l4 4 4-4" fill="none" stroke="#444"/></svg>
<div class="pt" style="left:620px">[ 无 ]&nbsp; <span class="l">402,528,884 KB</span> 可用，共 <span class="l">524,287,996 KB</span></div>
<div class="a" style="left:1041px;top:116px;width:1px;height:25px;background:#a0a0a0"></div>
<div class="pt" style="left:1050px">\</div><div class="pt" style="left:1069px;top:117px;font-size:13px">..</div>
<!-- tab/current dir bars -->
<div class="a" style="left:0;top:144px;width:483px;height:12px;background:#a9bdd6"></div>
<div class="a" style="left:560px;top:144px;width:482px;height:12px;background:#9db7d8"></div>
<div class="t" style="left:500px;top:146px;font-size:13px;color:#111">*&nbsp; ▼</div>
<div class="t" style="left:1058px;top:146px;font-size:13px;color:#111">*&nbsp; ▼</div>
<div class="t" style="left:588px;top:147px;font-size:15px;color:#223">d:\EXD\CA00103DA0\*.*</div>
</div>
<div id="chat">
<div class="panel"></div>
<!-- top bar -->
<div class="a" style="left:8px;top:5px;width:191px;height:29px;border-radius:8px;background:#f4ebfd"></div>
<svg style="left:26px;top:15px" width="13" height="12" viewBox="0 0 13 12"><path d="M8 2.200A4.300 4.300 0 1 0 9.600 8.500M8.800 9.200l1.500 1.800" fill="none" stroke="#5f6470" stroke-width="1.200" stroke-linecap="round"/><path d="M6.800 6.500l1.300-3.500 1.300 3.500M7.300 5.500h1.600M11 3v3.500" fill="none" stroke="#5f6470" stroke-width=".9"/></svg>
<div class="a" style="left:48px;top:13px;width:151px;height:18px;overflow:hidden"><div class="t" style="left:0;top:1px;font-size:14px;color:#b3abc0">搜索或提问 (Ctrl+Shift+F)</div></div>
<div class="a" style="left:325px;top:7px;width:131px;height:27px;border-radius:8px;background:#f5ecfd"></div>
<svg style="left:338px;top:12px" width="16" height="16" viewBox="0 0 16 16"><defs><linearGradient id="rg1" x1="0" y1="0" x2="1" y2="0"><stop offset="0" stop-color="#ff4a3a"/><stop offset=".55" stop-color="#ffa51f"/><stop offset="1" stop-color="#ffcf1a"/></linearGradient><linearGradient id="rg2" x1="0" y1="0" x2="0" y2="1"><stop offset="0" stop-color="#ffcf1a"/><stop offset=".6" stop-color="#f4c21a"/><stop offset="1" stop-color="#4f86ff"/></linearGradient></defs><circle cx="8" cy="8" r="6.700" fill="none" stroke="#2f6bff" stroke-width="1.500"/><path d="M2.500 4.200A6.700 6.700 0 0 1 13.600 4.300" fill="none" stroke="url(#rg1)" stroke-width="1.600"/><path d="M13.500 4.200A6.700 6.700 0 0 1 11.500 13.700" fill="none" stroke="url(#rg2)" stroke-width="1.600"/><path d="M6.500 3.500C3.500 3.800 1.600 6 1.600 8.500c0 3 2.400 5.600 6.400 5.900-2.200-1.300-2.300-3.300-1-5.100 1.300-1.800 1.500-4.300-.5-5.800z" fill="#2f6bff"/></svg>
<div class="a" style="left:368px;top:12px;width:1px;height:16px;background:#e9dff4"></div>
<svg style="left:382px;top:13px" width="16" height="14" viewBox="0 0 16 14"><path d="M4.500 11H3a2 2 0 0 1-2-2V3a2 2 0 0 1 2-2h10a2 2 0 0 1 2 2v6a2 2 0 0 1-2 2h-1.500" class="ic"/><path d="M5.500 13L8 9.500 10.500 13z" class="ic"/></svg>
<div class="a" style="left:412px;top:12px;width:1px;height:16px;background:#e9dff4"></div>
<svg style="left:427px;top:14px" width="14" height="14" viewBox="0 0 14 14"><path d="M7 0v14M0 7h14" stroke="#5f646e" stroke-width="1.100"/></svg>
<svg style="left:485px;top:20px" width="14" height="2" viewBox="0 0 14 2"><path d="M0 1h14" stroke="#5f646e" stroke-width="1.100"/></svg>
<svg style="left:524px;top:14px" width="13" height="13" viewBox="0 0 13 13"><rect x=".7" y=".7" width="11.600" height="11.600" rx="1" fill="none" stroke="#5f646e" stroke-width="1.100"/></svg>
<svg style="left:562px;top:14px" width="12" height="12" viewBox="0 0 12 12"><path d="M0 0l12 12M12 0L0 12" stroke="#5f646e" stroke-width="1.100"/></svg>
<!-- header -->
<svg class="av" style="left:5px;top:48px" width="31" height="31" viewBox="0 0 36 36"><defs><clipPath id="avc"><rect width="36" height="36" rx="8"/></clipPath><filter id="avb"><feGaussianBlur stdDeviation=".5"/></filter></defs><g clip-path="url(#avc)"><g filter="url(#avb)"><rect width="36" height="36" fill="#8a7350"/><rect x="0" y="0" width="9" height="30" fill="#a58d6c"/><path d="M2 0l5 14M6 0l4 10" stroke="#e8e0d0" stroke-width="1"/><rect x="9" y="0" width="18" height="24" fill="#5e4826"/><rect x="27" y="0" width="9" height="26" fill="#b99868"/><rect x="30" y="4" width="6" height="18" fill="#6b5330"/><rect x="0" y="24" width="36" height="12" fill="#aebcc2"/><rect x="0" y="30" width="36" height="6" fill="#c8d0d0"/><rect x="4" y="12.500" width="7" height="12" rx="1.500" fill="#2c4f86"/><path d="M11 17c2-3 10-3 12 0l1 6H10z" fill="#2f5f98"/><path d="M22 15l8-2 .8 2-8 3z" fill="#2f5f98"/><circle cx="31" cy="14" r="1.500" fill="#f0c8b0"/><circle cx="14" cy="19" r="1.800" fill="#f0c8b0"/><path d="M10 22h10l1 8h-9z" fill="#d9a818"/><ellipse cx="19.500" cy="13.500" rx="5.500" ry="5" fill="#f2c9b2"/><ellipse cx="22.500" cy="15" rx="1.800" ry="1.300" fill="#e8a8a0"/><circle cx="19" cy="12.500" r=".8" fill="#222"/><circle cx="23" cy="12.300" r=".7" fill="#222"/><path d="M11 9c0-6 6-8.500 10-8s6.500 3.500 6 6.500l-5 1.500c-3-1-8 0-9 3z" fill="#e9b11f"/><path d="M12.500 10.500c2-2.500 8-3 12-2" stroke="#1a1a1a" stroke-width="1.600" fill="none"/><rect x="20" y="4.500" width="4" height="1.500" fill="#1f3f80"/><path d="M22 19c2-2 6-2 7 1l-1 4-3 6h-3z" fill="#f2c414"/><circle cx="26" cy="21" r="1.800" fill="#c8c8d8"/><path d="M22 24l-3 7" stroke="#e0b010" stroke-width="2"/><ellipse cx="13.500" cy="32.500" rx="3.500" ry="2.500" fill="#1a1a1a"/><ellipse cx="26" cy="32" rx="3.200" ry="3.400" fill="#1a1a1a"/></g></g></svg>
<div class="t" style="left:44px;top:49px;font-size:14px;font-weight:500;color:#171a1d;word-spacing:4px">余 军</div>
<svg style="left:88px;top:50px" width="14" height="13" viewBox="0 0 14 13"><rect x=".8" y=".8" width="12.400" height="9" rx="1.500" fill="none" stroke="#1677ff" stroke-width="1.500"/><path d="M4 12.200h6" stroke="#1677ff" stroke-width="1.500"/></svg>
<div class="t" style="left:44px;top:68px;font-size:12px;color:#a3a6ad;letter-spacing:.1px">余军(衡阳零一科技有限公司-P3CAM | CAM主管)</div>
<svg style="left:394px;top:56px" width="18" height="18" viewBox="0 0 18 18"><path d="M3 2.500c-1.500 1.500-.5 6 3 9.500s8 4.500 9.500 3l.8-1.500-3-2.300-1.600 1.100c-1.500-.6-4-3.200-4.600-4.700L8.200 6 6 3z" class="ic"/><path d="M9 1.500h6v5H9zM15 3l2-1v4l-2-1" class="ic" stroke-width="1.100"/></svg>
<svg style="left:432px;top:57px" width="18" height="16" viewBox="0 0 18 16"><path d="M1 3a2 2 0 0 1 2-2h3.500l2 2H15a2 2 0 0 1 2 2v8a2 2 0 0 1-2 2H3a2 2 0 0 1-2-2z" class="ic"/><path d="M6 10.500h6" class="ic"/></svg>
<svg style="left:470px;top:56px" width="18" height="18" viewBox="0 0 18 18"><circle cx="8" cy="5.500" r="3.700" class="ic"/><path d="M1 16.500c.5-4 3.500-6 7-6 1 0 2 .2 3 .6M14 11v6M11 14h6" class="ic"/></svg>
<svg style="left:509px;top:57px" width="17" height="16" viewBox="0 0 17 16"><path d="M1 1h14M1 6h5M1 11h5" class="ic"/><circle cx="11" cy="9" r="3.700" class="ic"/><path d="M13.800 11.800L16 14.500" class="ic"/></svg>
<svg style="left:546px;top:56px" width="18" height="18" viewBox="0 0 18 18"><path d="M7.300 1h3.400l.5 2.200 1.500.9 2.200-.7 1.700 2.900-1.700 1.500v1.800l1.700 1.500-1.700 2.900-2.200-.7-1.500.9-.5 2.200H7.300l-.5-2.200-1.500-.9-2.200.7-1.700-2.900 1.700-1.500V7.800L1.400 6.300l1.700-2.900 2.200.7 1.500-.9z" class="ic"/><circle cx="9" cy="9" r="2.600" class="ic"/></svg>
<div class="a" style="left:6px;top:88px;width:563px;height:1px;background:#e2e5ee"></div>
<!-- card -->
<div class="a" style="left:52px;top:88px;width:361px;height:36px;background:#fff;border:1px solid #e4e6ee;border-top:0;border-radius:0 0 8px 8px"></div>
<div class="a" style="left:65px;top:88px;width:103px;height:23px;background:#f5f5f6;border-radius:0 0 12px 12px"></div>
<div class="a" style="left:180px;top:88px;width:103px;height:23px;background:#f5f5f6;border-radius:0 0 12px 12px"></div>
<div class="a" style="left:294px;top:88px;width:104px;height:23px;background:#f5f5f6;border-radius:0 0 12px 12px"></div>
<div class="t" style="left:102px;top:89px;font-size:14px">打开</div>
<div class="t" style="left:196px;top:89px;font-size:14px">打开文件夹</div>
<div class="t" style="left:325px;top:89px;font-size:14px">添加到</div>
<!-- msg 1 -->
<div class="a" style="left:379px;top:143px;width:134px;height:42px;border-radius:10px;background:#cfe6fd"></div>
<div class="t" style="left:390px;top:158px;font-size:14px">有要求盖油面塞孔</div>
<div class="gs" style="top:143px">谷松</div>
<div class="rd" style="top:194px">已读</div>
<div class="rd" style="left:481px;top:214px">19:18</div>
<!-- img 1 -->
<div class="a" style="left:273px;top:229px;width:240px;height:80px;border-radius:6px;background:#c8e8c9;overflow:hidden">
 <div class="a" style="left:12px;top:0;width:206px;height:6px;background:linear-gradient(#55705a,#7f9e83 40%,rgba(200,232,201,0))"></div>
 <div class="a" style="left:12px;top:0;width:1px;height:80px;background:#4f6b52"></div>
 <div class="a" style="left:25px;top:0;width:1px;height:80px;background:#4f6b52"></div>
 <div class="a" style="left:218px;top:0;width:1px;height:80px;background:#4f6b52"></div>
 <div class="t" style="left:17px;top:29px;font-size:29px;font-weight:900;color:#111;transform:scaleX(.12);transform-origin:0 0;filter:blur(.7px)">1)</div>
 <div class="t" style="left:26px;top:29px;font-size:29px;font-weight:900;color:#111;transform:scaleX(.137);transform-origin:0 0;filter:blur(.7px)">如果插件孔需要盖油面塞孔的板，阻焊塞孔不要出铝片</div>
 <div class="a" style="left:219px;top:8px;width:6px;height:36px;border-radius:3px;background:linear-gradient(rgba(170,90,170,0),#b070b0 30%,#a04aa0 85%,rgba(170,90,170,0));filter:blur(.6px)"></div>
 <div class="a" style="left:219px;top:46px;width:19px;height:34px;background:repeating-linear-gradient(90deg,#b583b3 0,#c8e8c9 1.500px,#a45aa2 3px,#d3c3d6 4.200px);-webkit-mask-image:linear-gradient(rgba(0,0,0,.15),#000 70%);mask-image:linear-gradient(rgba(0,0,0,.15),#000 70%);filter:blur(.5px)"></div>
</div>
<div class="gs" style="top:229px">谷松</div>
<div class="a" style="left:193px;top:285px;width:72px;height:24px;border-radius:6px;background:#fff;border:1px solid #eceef3"></div>
<svg style="left:198px;top:290px" width="15" height="15" viewBox="0 0 15 15"><circle cx="7" cy="7" r="5.800" class="ic" stroke-width="1.100"/><path d="M4.500 8c.6 2 4.400 2 5 0z" fill="#5f646e"/><circle cx="5" cy="5.500" r=".7" fill="#5f646e"/><circle cx="9" cy="5.500" r=".7" fill="#5f646e"/><path d="M11.500 9.500v4M9.500 11.500h4" stroke="#5f646e" stroke-width="1.200"/></svg>
<div class="a" style="left:217px;top:291px;width:1px;height:12px;background:#eef0f4"></div>
<svg style="left:222px;top:290px" width="15" height="15" viewBox="0 0 15 15"><path d="M7.500 1.200a6 6 0 1 1-3 11.200L1.500 13.500l1-2.800A6 6 0 0 1 7.500 1.200z" class="ic" stroke-width="1.100"/><circle cx="5" cy="7.300" r=".7" fill="#5f646e"/><circle cx="7.500" cy="7.300" r=".7" fill="#5f646e"/><circle cx="10" cy="7.300" r=".7" fill="#5f646e"/></svg>
<div class="a" style="left:241px;top:291px;width:1px;height:12px;background:#eef0f4"></div>
<svg style="left:247px;top:296px" width="13" height="3" viewBox="0 0 13 3"><circle cx="1.500" cy="1.500" r="1.100" fill="#5f646e"/><circle cx="6.500" cy="1.500" r="1.100" fill="#5f646e"/><circle cx="11.500" cy="1.500" r="1.100" fill="#5f646e"/></svg>
<div class="rd" style="top:318px">已读</div>
<!-- img 2 -->
<div class="a" id="pcb" style="left:275px;top:353px;width:237px;height:133px;border-radius:4px;background:#000;overflow:hidden">
<svg style="left:0;top:0" width="237" height="133" viewBox="0 0 237 133"><rect width="237" height="133" fill="#000"/><rect width="237" height="3" fill="#dcdfe4"/><rect x="0" y="3" width="31" height="130" fill="#5fcfb3"/><rect x="1" y="4" width="29" height="3" fill="#a5e6d6"/><rect x="1" y="8" width="22" height="2.500" fill="#9adfce"/><rect x="1" y="11.500" width="28" height="3" fill="#a5e6d6"/><rect x="2" y="17" width="23" height="82" fill="#0a0a0a"/><rect x="8" y="17" width="16" height="2.500" fill="#fff"/><rect x="8" y="20" width="16" height="2.500" fill="#1aa27c"/><rect x="8" y="23.0" width="16.500" height="2.600" fill="#f2b544"/><rect x="8" y="26.1" width="16.500" height="2.600" fill="#f2b544"/><rect x="8" y="29.3" width="16.500" height="2.600" fill="#f2b544"/><rect x="8" y="32.5" width="16.500" height="2.600" fill="#f2b544"/><rect x="8" y="35.6" width="16.500" height="2.600" fill="#f2b544"/><rect x="8" y="38.8" width="16.500" height="2.600" fill="#f2b544"/><rect x="8" y="41.9" width="16.500" height="2.600" fill="#f2b544"/><rect x="8" y="45.0" width="16.500" height="2.600" fill="#f2b544"/><rect x="8" y="48.2" width="16.500" height="2.600" fill="#f2b544"/><rect x="8" y="51.3" width="16.500" height="2.600" fill="#f2b544"/><rect x="8" y="54.5" width="16.500" height="2.600" fill="#f2b544"/><rect x="4" y="57.500" width="3" height="3" fill="#f00"/><rect x="8" y="58" width="16" height="2.500" fill="#1aa27c"/><rect x="8" y="61" width="16" height="2.500" fill="#fff"/><rect x="4" y="64" width="3" height="3.500" fill="#00f"/><rect x="8" y="64.5" width="16.500" height="2.400" fill="#7fd6c0"/><rect x="8" y="67.9" width="16.500" height="2.400" fill="#9adfce"/><rect x="8" y="71.3" width="16.500" height="2.400" fill="#7fd6c0"/><rect x="8" y="74.7" width="16.500" height="2.400" fill="#9adfce"/><rect x="8" y="78.1" width="16.500" height="2.400" fill="#7fd6c0"/><rect x="8" y="81.5" width="16.500" height="2.400" fill="#9adfce"/><rect x="8" y="84.9" width="16.500" height="2.400" fill="#7fd6c0"/><rect x="8" y="88.3" width="16.500" height="2.400" fill="#9adfce"/><rect x="8" y="91.7" width="16.500" height="2.400" fill="#7fd6c0"/><rect x="8" y="95.1" width="16.500" height="2.400" fill="#9adfce"/><rect x="2" y="17" width="2" height="82" fill="#3fa98e"/><rect x="38" y="43" width="72" height="70.500" fill="#7fdccb"/><rect x="38" y="43" width="72" height="5.600" fill="#fff"/><rect x="39" y="49" width="63" height="58.500" fill="#000"/><rect x="103" y="50.0" width="6" height="5" fill="#a8eadd" stroke="#3e9c86" stroke-width=".4"/><rect x="103" y="56.1" width="6" height="5" fill="#a8eadd" stroke="#3e9c86" stroke-width=".4"/><rect x="103" y="62.2" width="6" height="5" fill="#a8eadd" stroke="#3e9c86" stroke-width=".4"/><rect x="103" y="68.3" width="6" height="5" fill="#a8eadd" stroke="#3e9c86" stroke-width=".4"/><rect x="103" y="74.4" width="6" height="5" fill="#a8eadd" stroke="#3e9c86" stroke-width=".4"/><rect x="103" y="80.5" width="6" height="5" fill="#a8eadd" stroke="#3e9c86" stroke-width=".4"/><rect x="103" y="86.6" width="6" height="5" fill="#a8eadd" stroke="#3e9c86" stroke-width=".4"/><rect x="70" y="109.500" width="9" height="2" fill="#456"/><rect x="49.5" y="64.600" width="3.800" height="6.800" rx="1.800" fill="#5bb520"/><rect x="49.5" y="88.500" width="3.800" height="6.800" rx="1.800" fill="#5bb520"/><rect x="55.2" y="64.600" width="3.800" height="6.800" rx="1.800" fill="#5bb520"/><rect x="55.2" y="88.500" width="3.800" height="6.800" rx="1.800" fill="#5bb520"/><rect x="61.0" y="64.600" width="3.800" height="6.800" rx="1.800" fill="#5bb520"/><rect x="61.0" y="88.500" width="3.800" height="6.800" rx="1.800" fill="#5bb520"/><rect x="66.8" y="64.600" width="3.800" height="6.800" rx="1.800" fill="#5bb520"/><rect x="66.8" y="88.500" width="3.800" height="6.800" rx="1.800" fill="#5bb520"/><rect x="72.5" y="64.600" width="3.800" height="6.800" rx="1.800" fill="#5bb520"/><rect x="72.5" y="88.500" width="3.800" height="6.800" rx="1.800" fill="#5bb520"/><rect x="78.2" y="64.600" width="3.800" height="6.800" rx="1.800" fill="#5bb520"/><rect x="78.2" y="88.500" width="3.800" height="6.800" rx="1.800" fill="#5bb520"/><rect x="84.0" y="64.600" width="3.800" height="6.800" rx="1.800" fill="#5bb520"/><rect x="84.0" y="88.500" width="3.800" height="6.800" rx="1.800" fill="#5bb520"/><rect x="89.8" y="64.600" width="3.800" height="6.800" rx="1.800" fill="#5bb520"/><rect x="89.8" y="88.500" width="3.800" height="6.800" rx="1.800" fill="#5bb520"/><rect x="53.600" y="74" width="35.400" height="11.400" fill="#5bb520"/><circle cx="61.5" cy="79.700" r=".8" fill="#35b6ff"/><circle cx="71.5" cy="79.700" r=".8" fill="#35b6ff"/><circle cx="82.0" cy="79.700" r=".8" fill="#35b6ff"/><rect x="42.8" y="75" width="7.700" height="3.300" rx="1.600" fill="#5bb520"/><rect x="42.8" y="80.500" width="7.700" height="3.300" rx="1.600" fill="#5bb520"/><rect x="92.6" y="75" width="7.700" height="3.300" rx="1.600" fill="#5bb520"/><rect x="92.6" y="80.500" width="7.700" height="3.300" rx="1.600" fill="#5bb520"/><rect x="39" y="91" width="6" height="10" fill="#f21d1d"/><rect x="50" y="98" width="7.500" height="7" fill="#f21d1d"/><rect x="61.600" y="98" width="7.700" height="7" fill="#f21d1d"/><rect x="39" y="106.300" width="6" height="1.200" fill="#f21d1d"/><rect x="50" y="106.300" width="7.500" height="1.200" fill="#f21d1d"/><rect x="61.600" y="106.300" width="7.700" height="1.200" fill="#f21d1d"/><rect x="73" y="101.500" width="2" height="2" fill="#1428e0"/><path d="M110 55L186 82M110 66L186 84M110 97L188 84M110 108L188 86" stroke="#6a6a62" stroke-width=".6" fill="none"/><rect x="135" y="58" width="56" height="4.800" fill="#d6a81a"/><rect x="208" y="58" width="29" height="4.800" fill="#d6a81a"/><path d="M119 62v71M122.500 62v71M126 62v71" stroke="#5a4a10" stroke-width=".7"/><rect x="162.7" y="76.0" width="0.8" height="4.5" fill="#86b81a" opacity="0.45"/><rect x="190.4" y="126.0" width="0.8" height="1.5" fill="#e02a1a" opacity="0.43"/><rect x="137.7" y="94.0" width="2.0" height="6.0" fill="#3f9a1a" opacity="0.72"/><rect x="190.4" y="70.1" width="1.0" height="1.2" fill="#4fae22" opacity="0.54"/><rect x="215.3" y="77.9" width="2.5" height="2.0" fill="#c9a11a" opacity="0.45"/><rect x="204.2" y="103.2" width="2.5" height="1.0" fill="#86b81a" opacity="0.61"/><rect x="161.6" y="104.6" width="2.0" height="1.0" fill="#4fae22" opacity="0.75"/><rect x="154.1" y="103.9" width="2.5" height="1.5" fill="#2f7a1a" opacity="0.54"/><rect x="209.0" y="76.0" width="1.5" height="3.0" fill="#4fae22" opacity="0.78"/><rect x="189.3" y="123.8" width="1.5" height="1.0" fill="#2f7a1a" opacity="0.69"/><rect x="176.8" y="121.4" width="1.5" height="1.5" fill="#4fae22" opacity="0.43"/><rect x="203.1" y="108.7" width="3.0" height="1.5" fill="#e02a1a" opacity="0.84"/><rect x="165.1" y="128.1" width="1.5" height="1.0" fill="#2f7a1a" opacity="0.43"/><rect x="169.8" y="123.5" width="0.8" height="1.0" fill="#86b81a" opacity="0.54"/><rect x="142.7" y="94.4" width="2.5" height="1.0" fill="#c9a11a" opacity="0.74"/><rect x="168.7" y="81.2" width="0.8" height="1.0" fill="#3f9a1a" opacity="0.41"/><rect x="216.9" y="78.0" width="0.8" height="2.2" fill="#86b81a" opacity="0.58"/><rect x="188.6" y="128.9" width="3.0" height="2.0" fill="#4fae22" opacity="0.63"/><rect x="221.2" y="128.8" width="3.0" height="2.0" fill="#e02a1a" opacity="0.60"/><rect x="179.5" y="92.4" width="1.0" height="0.8" fill="#2f7a1a" opacity="0.48"/><rect x="130.7" y="123.7" width="1.5" height="3.8" fill="#c9a11a" opacity="0.88"/><rect x="192.4" y="97.3" width="0.8" height="1.5" fill="#2f7a1a" opacity="0.64"/><rect x="161.4" y="75.5" width="3.0" height="1.0" fill="#2f7a1a" opacity="0.81"/><rect x="145.3" y="67.5" width="1.0" height="3.8" fill="#86b81a" opacity="0.86"/><rect x="209.1" y="85.7" width="3.0" height="0.8" fill="#c9a11a" opacity="0.66"/><rect x="225.2" y="89.5" width="1.0" height="2.0" fill="#86b81a" opacity="0.56"/><rect x="151.9" y="119.6" width="4.0" height="1.0" fill="#e02a1a" opacity="0.77"/><rect x="152.3" y="100.2" width="1.5" height="0.8" fill="#c9a11a" opacity="0.64"/><rect x="148.7" y="105.9" width="1.5" height="1.5" fill="#c9a11a" opacity="0.88"/><rect x="167.0" y="80.6" width="1.0" height="1.5" fill="#3f9a1a" opacity="0.64"/><rect x="233.4" y="106.3" width="0.8" height="1.5" fill="#c9a11a" opacity="0.80"/><rect x="137.1" y="109.6" width="2.0" height="1.0" fill="#4fae22" opacity="0.62"/><rect x="196.0" y="71.7" width="3.0" height="1.5" fill="#4fae22" opacity="0.76"/><rect x="224.8" y="119.2" width="1.0" height="2.0" fill="#2f7a1a" opacity="0.73"/><rect x="165.5" y="102.2" width="0.8" height="1.5" fill="#4fae22" opacity="0.66"/><rect x="227.9" y="94.6" width="4.0" height="1.0" fill="#3f9a1a" opacity="0.41"/><rect x="150.8" y="99.1" width="4.0" height="2.0" fill="#86b81a" opacity="0.61"/><rect x="142.0" y="126.1" width="1.5" height="1.5" fill="#86b81a" opacity="0.61"/><rect x="226.2" y="99.1" width="2.5" height="1.0" fill="#4fae22" opacity="0.84"/><rect x="211.1" y="106.2" width="4.0" height="1.0" fill="#2f7a1a" opacity="0.71"/><rect x="140.9" y="70.1" width="2.5" height="2.0" fill="#4fae22" opacity="0.84"/><rect x="134.1" y="78.6" width="0.8" height="0.8" fill="#86b81a" opacity="0.41"/><rect x="232.1" y="106.0" width="1.0" height="1.0" fill="#86b81a" opacity="0.80"/><rect x="182.3" y="82.3" width="2.5" height="1.0" fill="#3f9a1a" opacity="0.82"/><rect x="135.8" y="81.9" width="0.8" height="1.0" fill="#4fae22" opacity="0.85"/><rect x="144.5" y="113.3" width="1.0" height="4.5" fill="#4fae22" opacity="0.88"/><rect x="151.5" y="128.9" width="2.0" height="1.5" fill="#3f9a1a" opacity="0.48"/><rect x="174.2" y="100.0" width="1.5" height="1.5" fill="#c9a11a" opacity="0.45"/><rect x="167.2" y="88.3" width="2.0" height="1.5" fill="#e02a1a" opacity="0.57"/><rect x="194.8" y="99.8" width="0.8" height="0.8" fill="#3f9a1a" opacity="0.89"/><rect x="139.2" y="83.5" width="0.8" height="1.0" fill="#4fae22" opacity="0.81"/><rect x="218.9" y="110.6" width="1.5" height="2.2" fill="#86b81a" opacity="0.69"/><rect x="201.6" y="94.1" width="0.8" height="1.0" fill="#4fae22" opacity="0.80"/><rect x="137.0" y="122.5" width="0.8" height="1.0" fill="#2f7a1a" opacity="0.41"/><rect x="234.4" y="93.6" width="2.0" height="2.2" fill="#86b81a" opacity="0.75"/><rect x="228.4" y="130.0" width="1.5" height="0.8" fill="#c9a11a" opacity="0.71"/><rect x="184.8" y="79.6" width="2.0" height="2.0" fill="#c9a11a" opacity="0.57"/><rect x="129.9" y="82.5" width="0.8" height="0.8" fill="#86b81a" opacity="0.89"/><rect x="183.0" y="82.2" width="2.0" height="0.8" fill="#e02a1a" opacity="0.73"/><rect x="186.4" y="124.7" width="2.5" height="1.0" fill="#3f9a1a" opacity="0.57"/><rect x="217.1" y="112.6" width="3.0" height="1.0" fill="#c9a11a" opacity="0.89"/><rect x="217.6" y="66.9" width="1.5" height="1.5" fill="#4fae22" opacity="0.73"/><rect x="168.8" y="99.4" width="1.5" height="2.0" fill="#c9a11a" opacity="0.42"/><rect x="147.8" y="83.8" width="0.8" height="1.0" fill="#c9a11a" opacity="0.89"/><rect x="186.5" y="82.1" width="1.5" height="1.0" fill="#4fae22" opacity="0.57"/><rect x="137.0" y="84.4" width="3.0" height="1.0" fill="#4fae22" opacity="0.45"/><rect x="215.4" y="75.5" width="2.5" height="0.8" fill="#c9a11a" opacity="0.55"/><rect x="152.9" y="104.6" width="2.5" height="1.0" fill="#e02a1a" opacity="0.78"/><rect x="205.1" y="98.6" width="1.5" height="2.0" fill="#4fae22" opacity="0.81"/><rect x="204.5" y="99.9" width="2.0" height="3.0" fill="#86b81a" opacity="0.78"/><rect x="188.8" y="119.7" width="0.8" height="2.0" fill="#3f9a1a" opacity="0.44"/><rect x="132.5" y="108.0" width="0.8" height="1.5" fill="#86b81a" opacity="0.43"/><rect x="130.0" y="101.1" width="1.0" height="1.5" fill="#2f7a1a" opacity="0.80"/><rect x="208.1" y="99.2" width="2.5" height="0.8" fill="#4fae22" opacity="0.77"/><rect x="178.7" y="119.4" width="4.0" height="1.0" fill="#3f9a1a" opacity="0.52"/><rect x="197.5" y="96.4" width="1.5" height="6.0" fill="#c9a11a" opacity="0.78"/><rect x="194.0" y="108.4" width="2.0" height="1.2" fill="#c9a11a" opacity="0.73"/><rect x="202.1" y="107.0" width="1.0" height="0.8" fill="#2f7a1a" opacity="0.53"/><rect x="199.9" y="111.7" width="3.0" height="1.5" fill="#86b81a" opacity="0.54"/><rect x="177.9" y="116.6" width="2.5" height="1.0" fill="#4fae22" opacity="0.87"/><rect x="129.9" y="96.3" width="4.0" height="2.0" fill="#2f7a1a" opacity="0.90"/><rect x="169.4" y="126.5" width="1.0" height="0.8" fill="#4fae22" opacity="0.77"/><rect x="156.0" y="89.7" width="2.5" height="2.0" fill="#4fae22" opacity="0.75"/><rect x="152.8" y="125.2" width="1.5" height="3.0" fill="#4fae22" opacity="0.87"/><rect x="200.9" y="92.8" width="3.0" height="1.0" fill="#e02a1a" opacity="0.56"/><rect x="217.9" y="66.1" width="1.5" height="6.0" fill="#3f9a1a" opacity="0.76"/><rect x="224.5" y="85.1" width="1.5" height="0.8" fill="#4fae22" opacity="0.58"/><rect x="173.8" y="84.2" width="1.0" height="1.2" fill="#c9a11a" opacity="0.72"/><rect x="143.9" y="130.1" width="2.0" height="2.0" fill="#c9a11a" opacity="0.79"/><rect x="173.8" y="67.9" width="2.0" height="2.0" fill="#4fae22" opacity="0.42"/><rect x="206.4" y="95.8" width="4.0" height="1.0" fill="#c9a11a" opacity="0.64"/><rect x="225.6" y="102.3" width="1.0" height="1.5" fill="#c9a11a" opacity="0.55"/><rect x="207.1" y="130.4" width="1.5" height="1.5" fill="#c9a11a" opacity="0.64"/><rect x="199.6" y="73.9" width="0.8" height="1.0" fill="#2f7a1a" opacity="0.68"/><rect x="176.5" y="88.0" width="4.0" height="1.5" fill="#86b81a" opacity="0.50"/><rect x="137.7" y="88.6" width="0.8" height="1.0" fill="#c9a11a" opacity="0.80"/><rect x="149.6" y="67.3" width="2.0" height="1.5" fill="#3f9a1a" opacity="0.59"/><rect x="231.5" y="74.3" width="1.0" height="4.5" fill="#3f9a1a" opacity="0.59"/><rect x="197.1" y="94.5" width="0.8" height="2.2" fill="#e02a1a" opacity="0.75"/><rect x="223.8" y="97.2" width="1.5" height="3.8" fill="#e02a1a" opacity="0.87"/><rect x="227.3" y="100.8" width="2.0" height="1.5" fill="#4fae22" opacity="0.51"/><rect x="144.3" y="130.1" width="1.5" height="1.2" fill="#4fae22" opacity="0.40"/><rect x="141.4" y="103.6" width="0.8" height="1.0" fill="#c9a11a" opacity="0.66"/><rect x="174.8" y="116.4" width="0.8" height="0.8" fill="#3f9a1a" opacity="0.59"/><rect x="151.9" y="105.7" width="0.8" height="2.0" fill="#2f7a1a" opacity="0.54"/><rect x="161.9" y="121.4" width="1.0" height="1.5" fill="#86b81a" opacity="0.52"/><rect x="230.8" y="112.5" width="0.8" height="2.2" fill="#2f7a1a" opacity="0.84"/><rect x="173.4" y="90.4" width="2.0" height="0.8" fill="#e02a1a" opacity="0.58"/><rect x="149.4" y="116.5" width="1.0" height="1.0" fill="#c9a11a" opacity="0.78"/><rect x="159.6" y="128.8" width="2.0" height="2.0" fill="#3f9a1a" opacity="0.64"/><rect x="225.4" y="69.7" width="2.0" height="0.8" fill="#4fae22" opacity="0.61"/><rect x="204.0" y="78.2" width="2.0" height="1.0" fill="#4fae22" opacity="0.87"/><rect x="163.2" y="78.2" width="1.5" height="3.8" fill="#e02a1a" opacity="0.82"/><rect x="233.4" y="95.2" width="0.8" height="1.2" fill="#4fae22" opacity="0.58"/><rect x="230.2" y="74.2" width="1.0" height="1.5" fill="#c9a11a" opacity="0.81"/><rect x="167.9" y="126.7" width="1.0" height="1.0" fill="#2f7a1a" opacity="0.42"/><rect x="172.0" y="119.6" width="1.5" height="6.0" fill="#4fae22" opacity="0.63"/><rect x="134.7" y="106.0" width="1.5" height="1.0" fill="#4fae22" opacity="0.53"/><rect x="204.7" y="86.9" width="1.0" height="2.2" fill="#4fae22" opacity="0.41"/><rect x="153.0" y="97.4" width="2.0" height="1.5" fill="#e02a1a" opacity="0.81"/><rect x="142.2" y="98.8" width="0.8" height="1.0" fill="#4fae22" opacity="0.70"/><rect x="163.1" y="87.1" width="2.0" height="2.2" fill="#3f9a1a" opacity="0.60"/><rect x="145.1" y="92.9" width="3.0" height="0.8" fill="#86b81a" opacity="0.56"/><rect x="232.9" y="124.3" width="0.8" height="1.0" fill="#3f9a1a" opacity="0.45"/><rect x="181.3" y="112.8" width="2.0" height="1.0" fill="#e02a1a" opacity="0.63"/><rect x="223.4" y="81.5" width="2.5" height="0.8" fill="#c9a11a" opacity="0.55"/><rect x="188.7" y="90.6" width="3.0" height="1.0" fill="#3f9a1a" opacity="0.49"/><rect x="153.2" y="84.6" width="2.5" height="1.0" fill="#e02a1a" opacity="0.53"/><rect x="154.3" y="100.7" width="3.0" height="0.8" fill="#4fae22" opacity="0.45"/><rect x="178.8" y="120.1" width="4.0" height="1.5" fill="#4fae22" opacity="0.84"/><rect x="152.9" y="69.3" width="4.0" height="2.0" fill="#4fae22" opacity="0.59"/><rect x="220.7" y="95.6" width="0.8" height="2.2" fill="#c9a11a" opacity="0.51"/><rect x="167.5" y="75.3" width="1.0" height="1.5" fill="#3f9a1a" opacity="0.81"/><rect x="215.6" y="93.0" width="1.5" height="1.0" fill="#4fae22" opacity="0.50"/><rect x="213.1" y="102.2" width="1.5" height="1.2" fill="#e02a1a" opacity="0.73"/><rect x="144.5" y="101.2" width="3.0" height="1.0" fill="#c9a11a" opacity="0.60"/><rect x="158.3" y="86.3" width="0.8" height="1.0" fill="#c9a11a" opacity="0.61"/><rect x="129.9" y="116.6" width="4.0" height="1.0" fill="#e02a1a" opacity="0.76"/><rect x="149.8" y="66.4" width="2.0" height="0.8" fill="#e02a1a" opacity="0.69"/><rect x="167.0" y="117.0" width="0.8" height="1.5" fill="#4fae22" opacity="0.72"/><rect x="225.3" y="71.9" width="1.5" height="2.0" fill="#c9a11a" opacity="0.54"/><rect x="183.8" y="127.1" width="0.8" height="1.5" fill="#3f9a1a" opacity="0.55"/><rect x="217.6" y="68.9" width="1.5" height="0.8" fill="#e02a1a" opacity="0.44"/><rect x="204.2" y="111.4" width="1.0" height="1.0" fill="#3f9a1a" opacity="0.81"/><rect x="147.6" y="80.4" width="2.0" height="2.0" fill="#c9a11a" opacity="0.46"/><rect x="154.4" y="113.8" width="1.0" height="0.8" fill="#4fae22" opacity="0.73"/><rect x="162.7" y="91.7" width="2.0" height="2.0" fill="#c9a11a" opacity="0.72"/><rect x="161.0" y="82.5" width="2.0" height="1.0" fill="#2f7a1a" opacity="0.49"/><rect x="128.4" y="131.1" width="2.0" height="1.0" fill="#2f7a1a" opacity="0.82"/><rect x="214.7" y="92.4" width="0.8" height="1.0" fill="#c9a11a" opacity="0.45"/><rect x="175.3" y="99.7" width="0.8" height="0.8" fill="#4fae22" opacity="0.86"/><rect x="161.6" y="113.5" width="0.8" height="0.8" fill="#e02a1a" opacity="0.73"/><rect x="193.7" y="111.7" width="1.0" height="1.2" fill="#2f7a1a" opacity="0.54"/><rect x="214.8" y="118.5" width="1.0" height="4.5" fill="#c9a11a" opacity="0.71"/><rect x="155.0" y="87.4" width="2.5" height="1.0" fill="#2f7a1a" opacity="0.47"/><rect x="181.7" y="126.7" width="1.0" height="2.0" fill="#86b81a" opacity="0.52"/><rect x="167.8" y="79.1" width="2.0" height="1.0" fill="#c9a11a" opacity="0.74"/><rect x="223.8" y="77.1" width="1.0" height="6.0" fill="#86b81a" opacity="0.42"/><rect x="219.8" y="129.8" width="2.0" height="2.0" fill="#4fae22" opacity="0.53"/><rect x="185.3" y="122.5" width="3.0" height="1.0" fill="#c9a11a" opacity="0.69"/><rect x="166.5" y="116.5" width="2.0" height="1.0" fill="#4fae22" opacity="0.55"/><rect x="183.2" y="86.5" width="4.0" height="2.0" fill="#c9a11a" opacity="0.77"/><rect x="207.9" y="80.6" width="1.5" height="2.0" fill="#e02a1a" opacity="0.66"/><rect x="152.0" y="104.5" width="2.5" height="1.0" fill="#2f7a1a" opacity="0.48"/><rect x="129.5" y="118.9" width="3.0" height="1.0" fill="#4fae22" opacity="0.72"/><rect x="221.2" y="117.6" width="2.0" height="1.0" fill="#4fae22" opacity="0.72"/><rect x="188.2" y="89.1" width="3.0" height="2.0" fill="#86b81a" opacity="0.77"/><rect x="154.6" y="125.6" width="0.8" height="0.8" fill="#e02a1a" opacity="0.49"/><rect x="145.0" y="126.2" width="0.8" height="0.8" fill="#3f9a1a" opacity="0.47"/><rect x="149.3" y="106.1" width="2.5" height="1.5" fill="#4fae22" opacity="0.65"/><rect x="134.8" y="107.3" width="3.0" height="1.5" fill="#4fae22" opacity="0.59"/><rect x="174.7" y="126.2" width="0.8" height="1.5" fill="#4fae22" opacity="0.53"/><rect x="196.9" y="74.1" width="3.0" height="1.0" fill="#c9a11a" opacity="0.72"/><rect x="200.7" y="111.3" width="2.5" height="1.0" fill="#3f9a1a" opacity="0.44"/><rect x="182.3" y="77.2" width="1.0" height="1.0" fill="#c9a11a" opacity="0.50"/><rect x="169.6" y="105.7" width="2.0" height="2.0" fill="#86b81a" opacity="0.75"/><rect x="219.8" y="94.9" width="3.0" height="1.0" fill="#c9a11a" opacity="0.79"/><rect x="169.9" y="104.6" width="1.0" height="3.8" fill="#4fae22" opacity="0.46"/><rect x="194.6" y="76.7" width="0.8" height="1.5" fill="#4fae22" opacity="0.75"/><rect x="195.8" y="112.0" width="0.8" height="4.5" fill="#c9a11a" opacity="0.50"/><rect x="230.1" y="101.2" width="3.0" height="0.8" fill="#e02a1a" opacity="0.45"/><rect x="218.7" y="119.6" width="3.0" height="0.8" fill="#c9a11a" opacity="0.64"/><rect x="142.2" y="118.3" width="3.0" height="1.0" fill="#c9a11a" opacity="0.61"/><rect x="130.2" y="82.9" width="1.5" height="0.8" fill="#c9a11a" opacity="0.86"/><rect x="210.3" y="105.7" width="2.0" height="1.0" fill="#4fae22" opacity="0.79"/><rect x="131.3" y="100.2" width="0.8" height="1.0" fill="#4fae22" opacity="0.67"/><rect x="151.2" y="122.9" width="0.8" height="2.0" fill="#4fae22" opacity="0.62"/><rect x="184.0" y="85.0" width="0.8" height="6.0" fill="#2f7a1a" opacity="0.45"/><rect x="202.4" y="120.5" width="2.0" height="2.0" fill="#86b81a" opacity="0.53"/><rect x="229.0" y="84.7" width="1.0" height="1.0" fill="#4fae22" opacity="0.87"/><rect x="210.0" y="98.4" width="3.0" height="2.0" fill="#c9a11a" opacity="0.58"/><rect x="170.9" y="92.0" width="3.0" height="0.8" fill="#4fae22" opacity="0.59"/><rect x="160.4" y="94.3" width="2.5" height="2.0" fill="#3f9a1a" opacity="0.87"/><rect x="141.6" y="105.2" width="3.0" height="2.0" fill="#c9a11a" opacity="0.69"/><rect x="183.8" y="123.3" width="2.0" height="2.0" fill="#4fae22" opacity="0.63"/><rect x="201.7" y="83.0" width="1.0" height="1.0" fill="#3f9a1a" opacity="0.65"/><rect x="156.6" y="115.8" width="4.0" height="2.0" fill="#4fae22" opacity="0.89"/><rect x="205.4" y="105.8" width="1.5" height="1.0" fill="#3f9a1a" opacity="0.53"/><rect x="230.2" y="131.7" width="1.0" height="0.8" fill="#4fae22" opacity="0.89"/><rect x="213.1" y="114.4" width="2.0" height="1.0" fill="#4fae22" opacity="0.54"/><rect x="222.7" y="96.6" width="0.8" height="1.5" fill="#e02a1a" opacity="0.75"/><rect x="181.6" y="107.7" width="0.8" height="3.0" fill="#e02a1a" opacity="0.40"/><rect x="153.9" y="122.3" width="3.0" height="2.0" fill="#e02a1a" opacity="0.82"/><rect x="199.5" y="109.1" width="4.0" height="2.0" fill="#4fae22" opacity="0.72"/><rect x="176.6" y="86.7" width="3.0" height="0.8" fill="#3f9a1a" opacity="0.79"/><rect x="204.3" y="107.6" width="1.5" height="1.5" fill="#4fae22" opacity="0.71"/><rect x="171.8" y="110.6" width="4.0" height="1.0" fill="#c9a11a" opacity="0.79"/><rect x="169.6" y="98.3" width="0.8" height="0.8" fill="#3f9a1a" opacity="0.48"/><rect x="211.7" y="128.1" width="1.0" height="3.8" fill="#2f7a1a" opacity="0.67"/><rect x="204.8" y="99.8" width="3.0" height="1.0" fill="#e02a1a" opacity="0.77"/><rect x="176.9" y="131.4" width="1.0" height="1.5" fill="#4fae22" opacity="0.76"/><rect x="193.7" y="108.1" width="1.5" height="1.0" fill="#4fae22" opacity="0.41"/><rect x="172.8" y="93.8" width="3.0" height="1.0" fill="#4fae22" opacity="0.51"/><rect x="207.3" y="128.0" width="2.5" height="1.0" fill="#e02a1a" opacity="0.63"/><rect x="145.6" y="127.3" width="0.8" height="1.0" fill="#86b81a" opacity="0.76"/><rect x="215.2" y="75.7" width="3.0" height="1.5" fill="#c9a11a" opacity="0.78"/><rect x="197.5" y="117.5" width="2.0" height="1.0" fill="#3f9a1a" opacity="0.53"/><rect x="168.2" y="82.7" width="2.0" height="1.0" fill="#c9a11a" opacity="0.58"/><rect x="198.0" y="87.1" width="2.0" height="1.5" fill="#4fae22" opacity="0.73"/><rect x="166.8" y="127.3" width="1.5" height="6.0" fill="#c9a11a" opacity="0.79"/><rect x="143.0" y="120.9" width="2.0" height="4.5" fill="#4fae22" opacity="0.50"/><rect x="135.7" y="85.3" width="2.5" height="0.8" fill="#3f9a1a" opacity="0.49"/><rect x="176.4" y="117.8" width="1.0" height="1.5" fill="#4fae22" opacity="0.70"/><rect x="201.6" y="130.5" width="0.8" height="2.0" fill="#c9a11a" opacity="0.50"/><rect x="202.1" y="101.0" width="3.0" height="1.5" fill="#4fae22" opacity="0.68"/><rect x="156.3" y="81.5" width="1.0" height="1.5" fill="#4fae22" opacity="0.64"/><rect x="224.9" y="112.2" width="1.0" height="1.5" fill="#4fae22" opacity="0.48"/><rect x="162.3" y="111.9" width="2.0" height="1.0" fill="#c9a11a" opacity="0.61"/><rect x="235.0" y="110.6" width="1.0" height="1.0" fill="#4fae22" opacity="0.41"/><rect x="132.9" y="114.6" width="1.5" height="0.8" fill="#2f7a1a" opacity="0.78"/><rect x="143.5" y="80.1" width="2.0" height="1.0" fill="#c9a11a" opacity="0.57"/><rect x="211.3" y="102.6" width="1.0" height="1.0" fill="#e02a1a" opacity="0.53"/><rect x="133.6" y="85.1" width="1.5" height="1.5" fill="#86b81a" opacity="0.89"/><rect x="221.4" y="88.8" width="1.0" height="1.5" fill="#c9a11a" opacity="0.50"/><rect x="204.3" y="74.4" width="0.8" height="0.8" fill="#86b81a" opacity="0.84"/><rect x="128.7" y="78.5" width="2.0" height="2.0" fill="#4fae22" opacity="0.79"/><rect x="225.4" y="106.4" width="2.5" height="1.0" fill="#4fae22" opacity="0.51"/><rect x="199.4" y="96.2" width="1.0" height="6.0" fill="#4fae22" opacity="0.83"/><rect x="173.1" y="72.6" width="0.8" height="1.0" fill="#4fae22" opacity="0.79"/><rect x="188.1" y="83.0" width="1.5" height="1.0" fill="#c9a11a" opacity="0.41"/><rect x="188.6" y="104.2" width="0.8" height="1.5" fill="#4fae22" opacity="0.81"/><rect x="210.8" y="93.8" width="3.0" height="1.5" fill="#4fae22" opacity="0.74"/><rect x="191.5" y="131.5" width="3.0" height="1.0" fill="#e02a1a" opacity="0.67"/><rect x="136.9" y="97.2" width="1.0" height="0.8" fill="#4fae22" opacity="0.74"/><rect x="141.0" y="129.8" width="0.8" height="1.0" fill="#4fae22" opacity="0.64"/><rect x="157.5" y="103.6" width="2.0" height="1.0" fill="#c9a11a" opacity="0.79"/><rect x="204.4" y="122.5" width="3.0" height="0.8" fill="#86b81a" opacity="0.75"/><rect x="177.3" y="127.5" width="1.5" height="0.8" fill="#4fae22" opacity="0.43"/><rect x="222.5" y="111.3" width="2.5" height="0.8" fill="#c9a11a" opacity="0.76"/><rect x="145.8" y="122.8" width="2.0" height="3.0" fill="#c9a11a" opacity="0.87"/><rect x="205.9" y="97.0" width="1.0" height="1.0" fill="#4fae22" opacity="0.58"/><rect x="197.0" y="107.6" width="2.0" height="1.5" fill="#2f7a1a" opacity="0.87"/><rect x="212.0" y="103.4" width="1.0" height="2.2" fill="#c9a11a" opacity="0.83"/><rect x="217.1" y="104.6" width="1.0" height="1.5" fill="#e02a1a" opacity="0.70"/><rect x="223.9" y="119.3" width="1.5" height="0.8" fill="#c9a11a" opacity="0.61"/><rect x="190.8" y="119.9" width="4.0" height="0.8" fill="#4fae22" opacity="0.81"/><rect x="220.8" y="103.7" width="1.5" height="2.0" fill="#2f7a1a" opacity="0.57"/><rect x="137.1" y="102.5" width="4.0" height="1.5" fill="#3f9a1a" opacity="0.55"/><rect x="134.2" y="92.1" width="3.0" height="1.0" fill="#4fae22" opacity="0.80"/><rect x="177.2" y="71.8" width="4.0" height="0.8" fill="#86b81a" opacity="0.85"/><rect x="222.7" y="100.4" width="2.0" height="2.0" fill="#3f9a1a" opacity="0.51"/><rect x="137.9" y="119.2" width="1.5" height="1.0" fill="#c9a11a" opacity="0.60"/><rect x="183.3" y="75.8" width="0.8" height="1.5" fill="#4fae22" opacity="0.59"/><rect x="131.2" y="84.5" width="0.8" height="3.8" fill="#3f9a1a" opacity="0.90"/><rect x="220.7" y="98.1" width="2.5" height="1.0" fill="#c9a11a" opacity="0.61"/><rect x="229.3" y="116.6" width="4.0" height="2.0" fill="#c9a11a" opacity="0.82"/><rect x="164.3" y="131.6" width="0.8" height="3.0" fill="#4fae22" opacity="0.68"/><rect x="221.2" y="96.2" width="4.0" height="0.8" fill="#e02a1a" opacity="0.86"/><rect x="153.0" y="71.9" width="2.5" height="1.5" fill="#4fae22" opacity="0.59"/><rect x="153.2" y="113.6" width="1.0" height="0.8" fill="#c9a11a" opacity="0.43"/><rect x="187.2" y="67.8" width="1.5" height="2.0" fill="#2f7a1a" opacity="0.43"/><rect x="143.5" y="115.8" width="1.0" height="1.0" fill="#2f7a1a" opacity="0.78"/><rect x="139.3" y="87.4" width="1.5" height="2.2" fill="#2f7a1a" opacity="0.59"/><rect x="175.2" y="119.3" width="3.0" height="0.8" fill="#3f9a1a" opacity="0.80"/><rect x="144.8" y="121.0" width="0.8" height="2.0" fill="#4fae22" opacity="0.79"/><rect x="230.5" y="127.1" width="2.0" height="0.8" fill="#2f7a1a" opacity="0.89"/><rect x="162.5" y="81.4" width="1.0" height="1.2" fill="#3f9a1a" opacity="0.77"/><rect x="147.3" y="95.8" width="1.0" height="1.5" fill="#c9a11a" opacity="0.61"/><rect x="154.4" y="67.7" width="1.5" height="1.0" fill="#c9a11a" opacity="0.65"/><rect x="162.0" y="125.6" width="0.8" height="1.0" fill="#4fae22" opacity="0.72"/><rect x="212.3" y="127.1" width="2.5" height="1.5" fill="#4fae22" opacity="0.53"/><rect x="149.6" y="90.0" width="1.5" height="1.0" fill="#4fae22" opacity="0.60"/><rect x="172.5" y="76.7" width="1.0" height="6.0" fill="#4fae22" opacity="0.62"/><rect x="182.3" y="99.7" width="2.0" height="0.8" fill="#86b81a" opacity="0.54"/><rect x="157.6" y="77.9" width="4.0" height="1.0" fill="#3f9a1a" opacity="0.76"/><rect x="193.1" y="98.7" width="1.5" height="1.0" fill="#3f9a1a" opacity="0.69"/><rect x="149.6" y="70.3" width="2.0" height="0.8" fill="#c9a11a" opacity="0.57"/><rect x="218.1" y="123.1" width="0.8" height="3.0" fill="#2f7a1a" opacity="0.47"/><rect x="199.2" y="82.4" width="1.0" height="3.8" fill="#c9a11a" opacity="0.69"/><rect x="219.8" y="89.5" width="2.0" height="3.0" fill="#c9a11a" opacity="0.76"/><rect x="215.4" y="123.1" width="1.5" height="1.5" fill="#4fae22" opacity="0.55"/><rect x="139.5" y="114.2" width="2.0" height="3.0" fill="#86b81a" opacity="0.47"/><rect x="154.1" y="71.8" width="1.0" height="0.8" fill="#86b81a" opacity="0.81"/><rect x="131.2" y="72.4" width="1.0" height="1.5" fill="#2f7a1a" opacity="0.66"/><rect x="203.2" y="72.8" width="1.0" height="4.5" fill="#4fae22" opacity="0.63"/><rect x="190.7" y="116.3" width="0.8" height="1.2" fill="#4fae22" opacity="0.67"/><rect x="152.3" y="81.0" width="3.0" height="2.0" fill="#e02a1a" opacity="0.48"/><rect x="216.4" y="127.9" width="2.0" height="1.5" fill="#86b81a" opacity="0.42"/><rect x="170.9" y="121.3" width="3.0" height="1.5" fill="#c9a11a" opacity="0.81"/><rect x="218.7" y="69.5" width="3.0" height="1.0" fill="#e02a1a" opacity="0.73"/><rect x="162.7" y="79.3" width="3.0" height="0.8" fill="#e02a1a" opacity="0.88"/><rect x="211.1" y="127.8" width="3.0" height="0.8" fill="#4fae22" opacity="0.42"/><rect x="196.6" y="83.5" width="3.0" height="2.0" fill="#86b81a" opacity="0.80"/><rect x="129.5" y="81.6" width="1.0" height="1.2" fill="#c9a11a" opacity="0.72"/><rect x="140.9" y="105.2" width="1.0" height="3.8" fill="#86b81a" opacity="0.87"/><rect x="175.1" y="99.8" width="1.5" height="1.5" fill="#c9a11a" opacity="0.52"/><rect x="137.4" y="102.1" width="4.0" height="1.5" fill="#3f9a1a" opacity="0.73"/><rect x="149.5" y="112.9" width="2.0" height="2.0" fill="#2f7a1a" opacity="0.63"/><rect x="161.2" y="82.0" width="1.0" height="1.0" fill="#e02a1a" opacity="0.88"/><rect x="170.4" y="127.0" width="1.0" height="1.0" fill="#c9a11a" opacity="0.65"/><rect x="158.5" y="131.2" width="1.5" height="0.8" fill="#4fae22" opacity="0.68"/><rect x="192.8" y="89.0" width="3.0" height="0.8" fill="#2f7a1a" opacity="0.58"/><rect x="209.6" y="100.4" width="3.0" height="1.0" fill="#c9a11a" opacity="0.47"/><rect x="149.7" y="106.3" width="2.0" height="2.2" fill="#2f7a1a" opacity="0.53"/><rect x="195.5" y="107.7" width="3.0" height="1.0" fill="#4fae22" opacity="0.40"/><rect x="209.9" y="104.7" width="2.0" height="1.5" fill="#4fae22" opacity="0.61"/><rect x="211.9" y="123.6" width="2.5" height="0.8" fill="#2f7a1a" opacity="0.75"/><rect x="158.8" y="89.3" width="1.5" height="1.5" fill="#e02a1a" opacity="0.72"/><rect x="128.7" y="115.2" width="2.0" height="1.5" fill="#4fae22" opacity="0.67"/><rect x="213.9" y="94.8" width="2.0" height="2.0" fill="#c9a11a" opacity="0.56"/><rect x="218.2" y="121.3" width="1.5" height="1.0" fill="#4fae22" opacity="0.41"/><rect x="155.5" y="125.1" width="1.5" height="2.0" fill="#86b81a" opacity="0.71"/><rect x="174.8" y="120.5" width="3.0" height="1.5" fill="#c9a11a" opacity="0.42"/><rect x="200.4" y="95.9" width="0.8" height="0.8" fill="#4fae22" opacity="0.60"/><rect x="181.6" y="108.8" width="2.5" height="1.0" fill="#e02a1a" opacity="0.64"/><rect x="175.1" y="107.2" width="2.5" height="1.0" fill="#4fae22" opacity="0.49"/><rect x="162.0" y="130.6" width="4.0" height="1.0" fill="#4fae22" opacity="0.73"/><rect x="159.6" y="88.7" width="2.5" height="1.5" fill="#86b81a" opacity="0.54"/><rect x="182.7" y="99.3" width="1.0" height="1.5" fill="#4fae22" opacity="0.58"/><rect x="234.3" y="108.0" width="1.5" height="1.2" fill="#4fae22" opacity="0.55"/><rect x="218.1" y="104.7" width="3.0" height="0.8" fill="#2f7a1a" opacity="0.78"/><rect x="188.7" y="123.5" width="2.5" height="2.0" fill="#3f9a1a" opacity="0.61"/><rect x="141.0" y="76.3" width="2.0" height="6.0" fill="#4fae22" opacity="0.44"/><rect x="229.4" y="98.4" width="2.0" height="2.0" fill="#4fae22" opacity="0.73"/><rect x="201.2" y="104.2" width="1.0" height="1.0" fill="#4fae22" opacity="0.42"/><rect x="195.3" y="122.7" width="2.5" height="0.8" fill="#2f7a1a" opacity="0.71"/><rect x="130.1" y="80.5" width="2.0" height="2.0" fill="#4fae22" opacity="0.62"/><rect x="194.4" y="82.5" width="0.8" height="1.0" fill="#4fae22" opacity="0.56"/><rect x="224.2" y="119.8" width="1.5" height="1.5" fill="#2f7a1a" opacity="0.89"/><rect x="135.2" y="110.7" width="3.0" height="2.0" fill="#c9a11a" opacity="0.60"/><rect x="204.2" y="67.5" width="0.8" height="1.0" fill="#e02a1a" opacity="0.49"/><rect x="232.0" y="85.2" width="1.0" height="3.8" fill="#86b81a" opacity="0.84"/><rect x="163.9" y="109.0" width="0.8" height="1.5" fill="#c9a11a" opacity="0.68"/><rect x="169.4" y="96.8" width="1.5" height="1.0" fill="#c9a11a" opacity="0.73"/><rect x="164.5" y="76.3" width="1.0" height="4.5" fill="#c9a11a" opacity="0.67"/><rect x="212.3" y="102.6" width="2.0" height="1.0" fill="#c9a11a" opacity="0.51"/><rect x="171.4" y="107.5" width="2.5" height="1.0" fill="#2f7a1a" opacity="0.65"/><rect x="152.3" y="95.9" width="1.0" height="1.0" fill="#2f7a1a" opacity="0.69"/><rect x="167.4" y="82.3" width="2.5" height="2.0" fill="#4fae22" opacity="0.74"/><rect x="137.8" y="122.2" width="1.5" height="4.5" fill="#4fae22" opacity="0.56"/><rect x="219.1" y="87.2" width="0.8" height="4.5" fill="#c9a11a" opacity="0.80"/><rect x="209.2" y="78.7" width="1.0" height="4.5" fill="#c9a11a" opacity="0.46"/><rect x="204.7" y="84.6" width="2.0" height="1.5" fill="#4fae22" opacity="0.87"/><rect x="146.9" y="90.2" width="4.0" height="1.0" fill="#4fae22" opacity="0.73"/><rect x="202.8" y="82.4" width="4.0" height="1.5" fill="#4fae22" opacity="0.49"/><rect x="140.3" y="126.2" width="3.0" height="1.0" fill="#4fae22" opacity="0.60"/><rect x="193.1" y="94.4" width="4.0" height="1.0" fill="#4fae22" opacity="0.68"/><rect x="195.4" y="128.1" width="2.5" height="1.0" fill="#86b81a" opacity="0.53"/><rect x="174.5" y="111.2" width="0.8" height="2.2" fill="#c9a11a" opacity="0.85"/><rect x="221.6" y="104.6" width="3.0" height="0.8" fill="#4fae22" opacity="0.42"/><rect x="162.1" y="117.3" width="1.5" height="0.8" fill="#e02a1a" opacity="0.90"/><rect x="193.8" y="80.6" width="2.5" height="0.8" fill="#e02a1a" opacity="0.62"/><rect x="164.4" y="99.2" width="3.0" height="1.5" fill="#3f9a1a" opacity="0.61"/><rect x="182.8" y="127.3" width="1.0" height="1.5" fill="#4fae22" opacity="0.88"/><rect x="216.3" y="102.9" width="1.0" height="2.0" fill="#3f9a1a" opacity="0.67"/><rect x="172.0" y="79.3" width="1.0" height="2.2" fill="#2f7a1a" opacity="0.74"/><rect x="153.5" y="82.0" width="1.5" height="3.8" fill="#c9a11a" opacity="0.75"/><rect x="142.3" y="112.7" width="2.5" height="2.0" fill="#4fae22" opacity="0.67"/><path d="M129.0 80.2h19.3" stroke="#b8961a" stroke-width="1" stroke-dasharray="2 1.500" opacity=".8"/><path d="M140.9 97.7h21.0" stroke="#b8961a" stroke-width="1" stroke-dasharray="2 1.500" opacity=".8"/><path d="M154.3 76.9h12.9" stroke="#b8961a" stroke-width="1" stroke-dasharray="2 1.500" opacity=".8"/><path d="M164.9 82.4h9.0" stroke="#b8961a" stroke-width="1" stroke-dasharray="2 1.500" opacity=".8"/><path d="M177.1 81.8h19.9" stroke="#b8961a" stroke-width="1" stroke-dasharray="2 1.500" opacity=".8"/><path d="M190.3 76.8h13.5" stroke="#b8961a" stroke-width="1" stroke-dasharray="2 1.500" opacity=".8"/><path d="M202.9 91.8h10.9" stroke="#b8961a" stroke-width="1" stroke-dasharray="2 1.500" opacity=".8"/><path d="M213.8 70.6h24.9" stroke="#b8961a" stroke-width="1" stroke-dasharray="2 1.500" opacity=".8"/><path d="M229.0 75.0h20.2" stroke="#b8961a" stroke-width="1" stroke-dasharray="2 1.500" opacity=".8"/><rect x="212" y="76" width="2.500" height="34" fill="#b88a1a" opacity=".8"/><rect x="224" y="76" width="2.500" height="34" fill="#b88a1a" opacity=".8"/><rect x="234" y="76" width="2.500" height="30" fill="#5bb520" opacity=".8"/><circle cx="133.500" cy="71.600" r="3.800" fill="#e2b428"/><circle cx="133.500" cy="71.600" r="1.800" fill="#e8e2f8"/><rect x="193.500" y="68.500" width="11.500" height="13.500" fill="#5bb520"/><circle cx="199" cy="73.200" r="2.600" fill="#d8c8f8" stroke="#d6a81a" stroke-width=".8"/><circle cx="199" cy="79.300" r="1.600" fill="#d8c8f8" stroke="#d6a81a" stroke-width=".6"/><rect x="131.800" y="90.800" width="7.700" height="7.200" fill="#5bb520"/><rect x="141.500" y="91" width="4" height="5" fill="#5bb520"/><rect x="150.500" y="91" width="4" height="5" fill="#5bb520"/><rect x="166" y="116" width="14" height="14" fill="#1f5f5f" opacity=".8"/><rect x="199" y="115" width="19" height="16" fill="#1f5f5f" opacity=".85"/><rect x="203" y="119" width="11" height="9" fill="none" stroke="#c85a1a" stroke-width=".7"/></svg>
</div>
<div class="gs" style="top:353px">谷松</div>
<div class="rd" style="top:496px">已读</div>
<!-- incoming -->
<svg style="left:5px;top:531px" width="36" height="36" viewBox="0 0 36 36"><g clip-path="url(#avc)"><g filter="url(#avb)"><rect width="36" height="36" fill="#8a7350"/><rect x="0" y="0" width="9" height="30" fill="#a58d6c"/><path d="M2 0l5 14M6 0l4 10" stroke="#e8e0d0" stroke-width="1"/><rect x="9" y="0" width="18" height="24" fill="#5e4826"/><rect x="27" y="0" width="9" height="26" fill="#b99868"/><rect x="30" y="4" width="6" height="18" fill="#6b5330"/><rect x="0" y="24" width="36" height="12" fill="#aebcc2"/><rect x="0" y="30" width="36" height="6" fill="#c8d0d0"/><rect x="4" y="12.500" width="7" height="12" rx="1.500" fill="#2c4f86"/><path d="M11 17c2-3 10-3 12 0l1 6H10z" fill="#2f5f98"/><path d="M22 15l8-2 .8 2-8 3z" fill="#2f5f98"/><circle cx="31" cy="14" r="1.500" fill="#f0c8b0"/><circle cx="14" cy="19" r="1.800" fill="#f0c8b0"/><path d="M10 22h10l1 8h-9z" fill="#d9a818"/><ellipse cx="19.500" cy="13.500" rx="5.500" ry="5" fill="#f2c9b2"/><ellipse cx="22.500" cy="15" rx="1.800" ry="1.300" fill="#e8a8a0"/><circle cx="19" cy="12.500" r=".8" fill="#222"/><circle cx="23" cy="12.300" r=".7" fill="#222"/><path d="M11 9c0-6 6-8.500 10-8s6.500 3.500 6 6.500l-5 1.500c-3-1-8 0-9 3z" fill="#e9b11f"/><path d="M12.500 10.500c2-2.500 8-3 12-2" stroke="#1a1a1a" stroke-width="1.600" fill="none"/><rect x="20" y="4.500" width="4" height="1.500" fill="#1f3f80"/><path d="M22 19c2-2 6-2 7 1l-1 4-3 6h-3z" fill="#f2c414"/><circle cx="26" cy="21" r="1.800" fill="#c8c8d8"/><path d="M22 24l-3 7" stroke="#e0b010" stroke-width="2"/><ellipse cx="13.500" cy="32.500" rx="3.500" ry="2.500" fill="#1a1a1a"/><ellipse cx="26" cy="32" rx="3.200" ry="3.400" fill="#1a1a1a"/></g></g></svg>
<div class="a" style="left:52px;top:531px;width:180px;height:42px;border-radius:10px;background:#fff"></div>
<div class="t" style="left:63px;top:546px;font-size:14px">直接从底层塞就可以啊，</div>
<div class="a" style="left:573px;top:500px;width:6px;height:94px;border-radius:3px;background:#d0d3dc"></div>
<!-- quick pills -->
<div class="pill" style="left:5px;width:76px"></div>
<svg style="left:14px;top:620px" width="14" height="14" viewBox="0 0 14 14"><path d="M12.500 7v4a2 2 0 0 1-2 2h-7a2 2 0 0 1-2-2V4a2 2 0 0 1 2-2H8" fill="none" stroke="#1677ff" stroke-width="1.400" stroke-linecap="round"/><path d="M4.500 6.500l3 3L13 2" fill="none" stroke="#1677ff" stroke-width="1.400" stroke-linecap="round" stroke-linejoin="round"/></svg>
<div class="t" style="left:35px;top:621px;font-size:12px">看待办</div>
<div class="pill" style="left:89px;width:76px"></div>
<svg style="left:98px;top:620px" width="14" height="14" viewBox="0 0 14 14"><rect x="1" y="2.500" width="12" height="10.500" rx="2.500" fill="none" stroke="#18a058" stroke-width="1.400"/><path d="M4 1v3M10 1v3M4.500 8l2 2 3.500-3.500" fill="none" stroke="#18a058" stroke-width="1.400" stroke-linecap="round" stroke-linejoin="round"/></svg>
<div class="t" style="left:119px;top:621px;font-size:12px">看闲忙</div>
<div class="pill" style="left:173px;width:28px"></div>
<svg style="left:181px;top:622px" width="12" height="10" viewBox="0 0 12 10"><path d="M.5 1h11M.5 5h11M.5 9h11" stroke="#5f646e" stroke-width="1.200"/></svg>
<!-- input -->
<div class="a" style="left:5px;top:649px;width:568px;height:90px;border-radius:16px;background:#fff;border:1px solid #e9ebf2"></div>
<div class="t" style="left:20px;top:664px;font-size:14px;color:#a2a5ab;letter-spacing:.3px">试试灵动回复 (Ctrl+Alt+R)</div>
<svg style="left:26px;top:703px" width="17" height="17" viewBox="0 0 17 17"><circle cx="8.500" cy="8.500" r="7.300" class="ic"/><circle cx="6" cy="6.800" r=".9" fill="#5f646e"/><circle cx="11" cy="6.800" r=".9" fill="#5f646e"/><path d="M5.200 9.800c.8 3 5.800 3 6.600 0z" class="ic" stroke-width="1.100"/></svg>
<svg style="left:60px;top:703px" width="17" height="17" viewBox="0 0 17 17"><path d="M5 7.500L8 1.200c1.500 0 2.300 1 2 2.500L9.500 6.500H14a1.500 1.500 0 0 1 1.500 1.800l-1 5.500A2 2 0 0 1 12.500 15.500H5z" class="ic"/><path d="M5 7.500H2v8h3" class="ic"/></svg>
<svg style="left:83px;top:709px" width="8" height="5" viewBox="0 0 8 5"><path d="M.5.5l3.500 3.500L7.500.5" class="ic" stroke-width="1.100"/></svg>
<div class="t" style="left:106px;top:702px;font-size:17px;color:#5f646e;letter-spacing:-1px">A<span style="font-size:13px">a</span></div>
<div class="a" style="left:122px;top:700px;width:5px;height:5px;border-radius:3px;background:#f5222d"></div>
<svg style="left:140px;top:703px" width="17" height="17" viewBox="0 0 17 17"><path d="M2 1l9.500 10.500M15 1L5.500 11.500" class="ic"/><circle cx="3.800" cy="13.200" r="2.600" class="ic"/><circle cx="13.200" cy="13.200" r="2.600" class="ic"/></svg>
<svg style="left:163px;top:709px" width="8" height="5" viewBox="0 0 8 5"><path d="M.5.5l3.500 3.500L7.500.5" class="ic" stroke-width="1.100"/></svg>
<svg style="left:186px;top:704px" width="18" height="15" viewBox="0 0 18 15"><path d="M1 3a2 2 0 0 1 2-2h3.500l2 2H15a2 2 0 0 1 2 2v7a2 2 0 0 1-2 2H3a2 2 0 0 1-2-2z" class="ic"/><path d="M9 11.500V6.500M6.800 8.500L9 6.300l2.200 2.200" class="ic"/></svg>
<svg style="left:222px;top:703px" width="17" height="17" viewBox="0 0 17 17"><circle cx="8.500" cy="8.500" r="7.300" class="ic"/><path d="M8.500 5v7M5 8.500h7" class="ic"/></svg>
<svg style="left:404px;top:703px" width="17" height="17" viewBox="0 0 17 17"><path d="M7 15.500l-3-2.500H1V1h13v8" class="ic"/><path d="M4 4.500h7M4 7.500h4" class="ic"/><text x="8" y="16" font-size="8" font-weight="bold" font-family="Liberation Sans,sans-serif" fill="#5f646e">AI</text></svg>
<svg style="left:442px;top:705px" width="14" height="14" viewBox="0 0 14 14"><path d="M8.500 1H11a2 2 0 0 1 2 2v2.500M5.500 13H3a2 2 0 0 1-2-2V8.500" class="ic"/></svg>
<div class="a" style="left:470px;top:697px;width:90px;height:30px;border-radius:15px;background:#eef0f4"></div>
<div class="t" style="left:480px;top:705px;font-size:13px;color:#b9bcc4">发送(S)</div>
<div class="a" style="left:532px;top:705px;width:1px;height:13px;background:#d5d8df"></div>
<div class="a" style="left:541px;top:709px;border-left:4.500px solid transparent;border-right:4.500px solid transparent;border-top:5px solid #5f646e"></div>
</div>
<div id="vw">
<div class="tb"></div>
<svg style="left:9px;top:8px" width="16" height="16" viewBox="0 0 16 16"><circle cx="8" cy="8" r="7" fill="none" stroke="#c8c8cc" stroke-width="1.200"/><path d="M8 7v5" stroke="#c8c8cc" stroke-width="1.400"/><circle cx="8" cy="4.500" r=".9" fill="#c8c8cc"/></svg>
<div class="t" style="left:34px;top:9px;font-size:12.400px;color:#d4d4d8">常规阻焊塞孔不要出2个铝片，可以一次塞.jpg (1673x692像素, 253 KB) - 第1/5张 - 66% - 爱奇艺看图</div>
<svg style="left:928px;top:10px" width="14" height="12" viewBox="0 0 14 12"><path d="M0 .7h14M0 5.700h14M0 10.700h14" class="wi"/></svg>
<svg style="left:958px;top:8px" width="17" height="15" viewBox="0 0 17 15"><path d="M0 7.300h5.300M5.300 .7v13.600M5.300 1.200l5.700 1.700h4.500a1 1 0 0 1 1 1v7a1 1 0 0 1-1 1h-4.500l-5.700 2.300" class="wi" stroke-linejoin="round"/></svg>
<svg style="left:992px;top:9px" width="14" height="13" viewBox="0 0 14 13"><path d="M.7 4.800V1.400h3.800M9.600 11.700h3.700V8" class="wi"/></svg>
<div class="a" style="left:1019px;top:9.500px;width:1px;height:12px;background:#4a4a50"></div>
<svg style="left:1035px;top:14px" width="11" height="2" viewBox="0 0 11 2"><path d="M0 1.300h11" class="wi"/></svg>
<svg style="left:1065px;top:9px" width="14" height="12" viewBox="0 0 14 12"><rect x=".7" y=".7" width="12.400" height="10.600" rx=".8" class="wi"/></svg>
<svg style="left:1099px;top:9px" width="12" height="12" viewBox="0 0 12 12"><path d="M.5.300l11 11.200M11.500.3L.5 11.500" class="wi"/></svg>
<div id="img">
<div class="a" style="left:0;top:0;width:39px;height:457px;background:#b9cfe6;border-right:1px solid #9fb4cc"></div>
<svg style="left:11px;top:1px" width="19" height="16" viewBox="0 0 19 16"><rect x="1" y="0" width="13" height="10" fill="#f4f6fa" stroke="#667"/><rect x="1" y="0" width="13" height="2" fill="#2a6fd8"/><path d="M3 4h2M7 4h2M11 4h1M3 6.500h2M7 6.500h2" stroke="#e33" stroke-width="1.200"/><path d="M2 12c0-2 15-2 15 0s-15 2-15 0z" fill="#ddd" stroke="#333" stroke-width=".8"/><path d="M5 12h8" stroke="#333"/></svg>
<div class="a" style="left:74px;top:0;width:6px;height:3px;background:#9acd32"></div>
<div class="t" style="left:61px;top:6px">全套制作</div>
<svg style="left:67px;top:19px" width="20" height="21" viewBox="0 0 20 21"><path d="M5 1l4 4H7v3l3 3 3-3V5h-2l4-4 4 4h-2v4l-4.500 4v6.500h-5V13L1 9V5h-2z" transform="translate(1,0) scale(.9,1)" fill="#8cc63f" stroke="#2d5a12" stroke-width="1"/></svg>
<div class="t" style="left:62px;top:42px">全套0X3</div>
<div class="a" style="left:115px;top:0;width:6px;height:457px;background:linear-gradient(90deg,#d5dbe4,#f4f6f9,#c9d2de)"></div>
<div class="a" style="left:121px;top:0;width:983px;height:18px;background:#d3deec"></div>
<div class="h" style="left:121.3px;width:22.4px"></div>
<div class="h" style="left:143.7px;width:45.9px">生产型号</div>
<div class="h" style="left:189.6px;width:61.7px">新生产型号</div>
<div class="h" style="left:251.3px;width:74.2px">升级前旧生产型号</div>
<div class="h" style="left:325.5px;width:23.0px">S板</div>
<div class="h" style="left:348.5px;width:42.5px">订单工厂</div>
<div class="h" style="left:391.0px;width:46.7px">BOM工厂</div>
<div class="h" style="left:437.7px;width:29.3px">AB类</div>
<div class="h" style="left:467.0px;width:25.8px">板厚</div>
<div class="h" style="left:492.8px;width:27.2px">板材</div>
<div class="h" style="left:520.0px;width:78.5px">验收标准</div>
<div class="h" style="left:598.5px;width:42.1px">成品长度</div>
<div class="h" style="left:640.6px;width:41.8px">成品宽度</div>
<div class="h" style="left:682.4px;width:42.2px">PNL规格</div>
<div class="h" style="left:724.6px;width:37.8px">字符</div>
<div class="h" style="left:762.4px;width:26.2px">阻焊</div>
<div class="h" style="left:788.6px;width:57.8px">终端客户代码</div>
<div class="h" style="left:846.4px;width:128.3px">型号创建时间</div>
<div class="h" style="left:974.7px;width:34.0px">创建人</div>
<div class="h" style="left:1008.7px;width:21.3px">SO</div>
<svg style="left:133px;top:8px" width="9" height="8" viewBox="0 0 9 8"><path d="M8.500 0v7.500H0z" fill="#3a7be0"/></svg>
<div class="a" style="left:121px;top:18px;width:983px;height:15px;background:#b4d2f6;border-top:1px solid #fff;border-bottom:1px solid #9cbde8"></div>
<div class="a" style="left:121px;top:19px;width:23px;height:14px;background:#d8d8d8;border-right:1px solid #aaa"></div>
<div class="a" style="left:125px;top:23px;border-top:3px solid transparent;border-bottom:3px solid transparent;border-left:4px solid #222"></div>
<div class="t" style="left:144.0px;top:22px;font-size:6.700px;color:#112;font-weight:400">CA00103DA0</div>
<div class="t" style="left:191.0px;top:22px;font-size:6.700px;color:#112;font-weight:400">1331120004C301</div>
<div class="t" style="left:349.5px;top:22px;font-size:6.700px;color:#112;font-weight:400">P2</div>
<div class="t" style="left:392.0px;top:22px;font-size:6.700px;color:#112;font-weight:400">P2</div>
<div class="t" style="left:439.0px;top:22px;font-size:6.700px;color:#112;font-weight:400">N</div>
<div class="t" style="left:521.0px;top:22px;font-size:6.700px;color:#112;font-weight:400">IPC-6012 II级</div>
<div class="t" style="left:600.0px;top:22px;font-size:6.700px;color:#112;font-weight:400">197.250</div>
<div class="t" style="left:642.0px;top:22px;font-size:6.700px;color:#112;font-weight:400">162.600</div>
<div class="t" style="left:726.0px;top:22px;font-size:7.500px;color:#112;font-weight:400">白色字符</div>
<div class="t" style="left:764.0px;top:22px;font-size:7.500px;color:#112;font-weight:400">绿色</div>
<div class="t" style="left:791.0px;top:22px;font-size:6.700px;color:#112;font-weight:400">A001</div>
<div class="t" style="left:848.0px;top:22px;font-size:6.700px;color:#112;font-weight:400">2025-04-04 00:44:43</div>
<div class="a" style="left:121px;top:66px;width:983px;height:7px;background:linear-gradient(#9aa7b8,#e8eef6 30%,#f4f7fb 60%,#a8b4c4)"></div>
<div class="a" style="left:121px;top:73px;width:983px;height:384px;background:#eef3fa"></div>
<div class="a" style="left:121px;top:78px;width:546px;height:1px;background:#8ea0b8"></div>
<div class="a" style="left:342px;top:71px;width:98px;height:14px;background:#f2f6fc;border:1px solid #8ea0b8;border-radius:2px"></div>
<div class="t" style="left:346px;top:74px;color:#1a2d6b;font-size:7.300px">【CA00103DA0】工艺流程</div>
<div class="a" style="left:135px;top:86px;width:130px;height:371px;background:linear-gradient(90deg,#7fa6e0,#a9c6ee 40%,#dfeafa)"></div>
<div class="a" style="left:121px;top:86px;width:14px;height:371px;background:linear-gradient(90deg,#cfdcf0,#f6f9fd 50%,#b8cbe8)"></div>
<svg style="left:122px;top:88px" width="14" height="62" viewBox="0 0 14 62"><path d="M.5 .5h13v60L.5 47z" fill="#eaf1fb" stroke="#34507c"/></svg>
<div class="t" style="left:125px;top:93px;width:8px;white-space:normal;line-height:8.500px;font-size:7.500px;font-weight:bold;color:#123">编写流程</div>
<div class="a" style="left:138px;top:91px;width:126px;height:23px;background:linear-gradient(#fdfefe,#e9eff8);border:1px solid #c5d2e4"></div>
<div class="t" style="left:148px;top:99px">单击节点加载工艺流程</div>
<svg style="left:241px;top:97px" width="18" height="14" viewBox="0 0 18 14"><ellipse cx="9" cy="6" rx="8.500" ry="5.800" fill="#c7bf16"/><path d="M4 10l-1 4 5-3z" fill="#c7bf16"/></svg>
<div class="a" style="left:139px;top:114px;width:125px;height:183px;background:#fff;border:1px solid #aab8cc"></div>
<div class="a" style="left:265px;top:86px;width:4px;height:371px;background:#dfe7f3;border-left:1px solid #8ea0b8"></div>
<div class="a" style="left:268px;top:86px;width:393px;height:371px;background:#fff;border-left:1px solid #8ea0b8"></div>
<div class="a" style="left:268px;top:86px;width:393px;height:12px;background:linear-gradient(#fbfcfe,#e2eaf5);border-bottom:1px solid #b8c6d8"></div>
<div class="t" style="left:270.2px;top:88px;">流程</div>
<div class="a" style="left:370.4px;top:86px;width:1px;height:371px;background:#d8e0ea"></div>
<div class="t" style="left:376.4px;top:88px;font-size:6.500px;top:89px;">ECN工厂</div>
<div class="a" style="left:407.0px;top:86px;width:1px;height:371px;background:#d8e0ea"></div>
<div class="t" style="left:413.0px;top:88px;">编写人</div>
<div class="a" style="left:456.0px;top:86px;width:1px;height:371px;background:#d8e0ea"></div>
<div class="t" style="left:462.0px;top:88px;">审核人</div>
<div class="a" style="left:505.5px;top:86px;width:1px;height:371px;background:#d8e0ea"></div>
<div class="t" style="left:511.5px;top:88px;">状态</div>
<div class="a" style="left:554.6px;top:86px;width:1px;height:371px;background:#d8e0ea"></div>
<div class="t" style="left:560.6px;top:88px;font-size:6.500px;top:89px;">PPC</div>
<div class="a" style="left:604.0px;top:86px;width:1px;height:371px;background:#d8e0ea"></div>
<div class="t" style="left:610.0px;top:88px;">文控</div>
<div class="a" style="left:649.5px;top:86px;width:1px;height:371px;background:#d8e0ea"></div>
<div class="t" style="left:652px;top:89px;font-size:5px">▲</div>
<div class="a" style="left:0;top:98.500px;width:661px;height:359px;overflow:hidden">
<div class="a" style="left:284px;top:0;width:0;height:359px;border-left:1px dotted #333"></div>
<div class="tr" style="top:-7.6px"><div class="a" style="left:27px;top:6.500px;width:8px;height:0;border-top:1px dotted #333"></div><div class="a" style="left:26.500px;top:-6px;width:0;height:13px;border-left:1px dotted #333"></div><svg style="left:36px;top:1px" width="10" height="11" viewBox="0 0 10 11"><path d="M.5.5h6l3 3v7h-9z" fill="#fdfefe" stroke="#5b8fd6" stroke-width=".9"/><path d="M6.500.5v3h3" fill="#4a86e0" stroke="#3a76d0" stroke-width=".5"/></svg><span style="left:50px">水洗烘干</span><span style="left:107px;font-size:7px">P2</span><span style="left:143px">谢艳芳</span><span style="left:192px">李海燕</span><span style="left:242px">已上网</span><span style="left:341px">华丽梅</span></div>
<div class="tr" style="top:5.0px"><div class="a" style="left:27px;top:6.500px;width:8px;height:0;border-top:1px dotted #333"></div><div class="a" style="left:26.500px;top:-6px;width:0;height:13px;border-left:1px dotted #333"></div><svg style="left:36px;top:1px" width="10" height="11" viewBox="0 0 10 11"><path d="M.5.5h6l3 3v7h-9z" fill="#fdfefe" stroke="#5b8fd6" stroke-width=".9"/><path d="M6.500.5v3h3" fill="#4a86e0" stroke="#3a76d0" stroke-width=".5"/></svg><span style="left:50px">水洗烘干2</span><span style="left:107px;font-size:7px">P2</span><span style="left:143px">谢艳芳</span><span style="left:192px">李海燕</span><span style="left:242px">已上网</span><span style="left:341px">华丽梅</span></div>
<div class="tr" style="top:18.4px"><div class="a" style="left:13.500px;top:4px;width:5.500px;height:5.500px;border:1px solid #888;background:#fff"></div><div class="a" style="left:15px;top:6.300px;width:2.500px;height:1px;background:#222"></div><div class="a" style="left:19px;top:6.500px;width:5px;height:0;border-top:1px dotted #333"></div><svg style="left:25px;top:1px" width="11" height="10" viewBox="0 0 11 10"><path d="M.5 1.500h4l1 1.500h5v6.500H.5z" fill="#ffbe0a" stroke="#c9930a" stroke-width=".7"/><path d="M.5 9.500l1.500-5h8.500L10.500 9.500z" fill="#ffe27a" stroke="#d9a31a" stroke-width=".5"/></svg><span style="left:39px">外形1</span><span style="left:107px;font-size:7px">P2</span><span style="left:143px">谢艳芳</span><span style="left:242px">已编写</span></div>
<div class="tr" style="top:30.7px"><div class="a" style="left:27px;top:6.500px;width:8px;height:0;border-top:1px dotted #333"></div><div class="a" style="left:26.500px;top:-6px;width:0;height:13px;border-left:1px dotted #333"></div><svg style="left:36px;top:1px" width="10" height="11" viewBox="0 0 10 11"><path d="M.5.5h6l3 3v7h-9z" fill="#fdfefe" stroke="#5b8fd6" stroke-width=".9"/><path d="M6.500.5v3h3" fill="#4a86e0" stroke="#3a76d0" stroke-width=".5"/></svg><span style="left:50px">锣板1</span><span style="left:107px;font-size:7px">P2</span><span style="left:143px">谢艳芳</span><span style="left:242px">已编写</span></div>
<div class="tr" style="top:43.0px"><div class="a" style="left:13.500px;top:4px;width:5.500px;height:5.500px;border:1px solid #888;background:#fff"></div><div class="a" style="left:15px;top:6.300px;width:2.500px;height:1px;background:#222"></div><div class="a" style="left:19px;top:6.500px;width:5px;height:0;border-top:1px dotted #333"></div><svg style="left:25px;top:1px" width="11" height="10" viewBox="0 0 11 10"><path d="M.5 1.500h4l1 1.500h5v6.500H.5z" fill="#ffbe0a" stroke="#c9930a" stroke-width=".7"/><path d="M.5 9.500l1.500-5h8.500L10.500 9.500z" fill="#ffe27a" stroke="#d9a31a" stroke-width=".5"/></svg><span style="left:39px">外层蚀刻1</span><span style="left:107px;font-size:7px">P2</span><span style="left:143px">谢艳芳</span><span style="left:192px">李海燕</span><span style="left:242px">已上网</span><span style="left:341px">华丽梅</span></div>
<div class="tr" style="top:55.7px"><div class="a" style="left:27px;top:6.500px;width:8px;height:0;border-top:1px dotted #333"></div><div class="a" style="left:26.500px;top:-6px;width:0;height:13px;border-left:1px dotted #333"></div><svg style="left:36px;top:1px" width="10" height="11" viewBox="0 0 10 11"><path d="M.5.5h6l3 3v7h-9z" fill="#fdfefe" stroke="#5b8fd6" stroke-width=".9"/><path d="M6.500.5v3h3" fill="#4a86e0" stroke="#3a76d0" stroke-width=".5"/></svg><span style="left:50px">退膜1</span><span style="left:107px;font-size:7px">P2</span><span style="left:143px">谢艳芳</span><span style="left:192px">李海燕</span><span style="left:242px">已上网</span><span style="left:341px">华丽梅</span></div>
<div class="tr" style="top:68.0px"><div class="a" style="left:27px;top:6.500px;width:8px;height:0;border-top:1px dotted #333"></div><div class="a" style="left:26.500px;top:-6px;width:0;height:13px;border-left:1px dotted #333"></div><svg style="left:36px;top:1px" width="10" height="11" viewBox="0 0 10 11"><path d="M.5.5h6l3 3v7h-9z" fill="#fdfefe" stroke="#5b8fd6" stroke-width=".9"/><path d="M6.500.5v3h3" fill="#4a86e0" stroke="#3a76d0" stroke-width=".5"/></svg><span style="left:50px">碱性蚀刻1</span><span style="left:107px;font-size:7px">P2</span><span style="left:143px">谢艳芳</span><span style="left:192px">李海燕</span><span style="left:242px">已上网</span><span style="left:341px">华丽梅</span></div>
<div class="tr" style="top:80.3px"><div class="a" style="left:27px;top:6.500px;width:8px;height:0;border-top:1px dotted #333"></div><div class="a" style="left:26.500px;top:-6px;width:0;height:13px;border-left:1px dotted #333"></div><svg style="left:36px;top:1px" width="10" height="11" viewBox="0 0 10 11"><path d="M.5.5h6l3 3v7h-9z" fill="#fdfefe" stroke="#5b8fd6" stroke-width=".9"/><path d="M6.500.5v3h3" fill="#4a86e0" stroke="#3a76d0" stroke-width=".5"/></svg><span style="left:50px">退锡1</span><span style="left:107px;font-size:7px">P2</span><span style="left:143px">谢艳芳</span><span style="left:192px">李海燕</span><span style="left:242px">已上网</span><span style="left:341px">华丽梅</span></div>
<div class="tr" style="top:93.3px"><div class="a" style="left:13.500px;top:4px;width:5.500px;height:5.500px;border:1px solid #888;background:#fff"></div><div class="a" style="left:15px;top:6.300px;width:2.500px;height:1px;background:#222"></div><div class="a" style="left:19px;top:6.500px;width:5px;height:0;border-top:1px dotted #333"></div><svg style="left:25px;top:1px" width="11" height="10" viewBox="0 0 11 10"><path d="M.5 1.500h4l1 1.500h5v6.500H.5z" fill="#ffbe0a" stroke="#c9930a" stroke-width=".7"/><path d="M.5 9.500l1.500-5h8.500L10.500 9.500z" fill="#ffe27a" stroke="#d9a31a" stroke-width=".5"/></svg><span style="left:39px">AOI1</span><span style="left:107px;font-size:7px">P2</span><span style="left:143px">谢艳芳</span><span style="left:192px">李海燕</span><span style="left:242px">已上网</span><span style="left:341px">华丽梅</span></div>
<div class="tr" style="top:105.6px"><div class="a" style="left:27px;top:6.500px;width:8px;height:0;border-top:1px dotted #333"></div><div class="a" style="left:26.500px;top:-6px;width:0;height:13px;border-left:1px dotted #333"></div><svg style="left:36px;top:1px" width="10" height="11" viewBox="0 0 10 11"><path d="M.5.5h6l3 3v7h-9z" fill="#fdfefe" stroke="#5b8fd6" stroke-width=".9"/><path d="M6.500.5v3h3" fill="#4a86e0" stroke="#3a76d0" stroke-width=".5"/></svg><span style="left:50px">外层AOI1</span><span style="left:107px;font-size:7px">P2</span><span style="left:143px">谢艳芳</span><span style="left:192px">李海燕</span><span style="left:242px">已上网</span><span style="left:341px">华丽梅</span></div>
<div class="tr" style="top:118.3px"><div class="a" style="left:13.500px;top:4px;width:5.500px;height:5.500px;border:1px solid #888;background:#fff"></div><div class="a" style="left:15px;top:6.300px;width:2.500px;height:1px;background:#222"></div><div class="a" style="left:19px;top:6.500px;width:5px;height:0;border-top:1px dotted #333"></div><svg style="left:25px;top:1px" width="11" height="10" viewBox="0 0 11 10"><path d="M.5 1.500h4l1 1.500h5v6.500H.5z" fill="#ffbe0a" stroke="#c9930a" stroke-width=".7"/><path d="M.5 9.500l1.500-5h8.500L10.500 9.500z" fill="#ffe27a" stroke="#d9a31a" stroke-width=".5"/></svg><span style="left:39px">阻焊1</span><span style="left:107px;font-size:7px">P2</span><span style="left:143px">谢艳芳</span><span style="left:192px">李海燕</span><span style="left:242px">已上网</span><span style="left:341px">华丽梅</span></div>
<div class="tr" style="top:131.0px"><div class="a" style="left:27px;top:6.500px;width:8px;height:0;border-top:1px dotted #333"></div><div class="a" style="left:26.500px;top:-6px;width:0;height:13px;border-left:1px dotted #333"></div><svg style="left:36px;top:1px" width="10" height="11" viewBox="0 0 10 11"><path d="M.5.5h6l3 3v7h-9z" fill="#fdfefe" stroke="#5b8fd6" stroke-width=".9"/><path d="M6.500.5v3h3" fill="#4a86e0" stroke="#3a76d0" stroke-width=".5"/></svg><span style="left:50px">阻焊前处理1</span><span style="left:107px;font-size:7px">P2</span><span style="left:143px">谢艳芳</span><span style="left:192px">李海燕</span><span style="left:242px">已上网</span><span style="left:341px">华丽梅</span></div>
<div class="tr" style="top:143.3px"><div class="a" style="left:33px;top:0;width:349px;height:12.500px;background:linear-gradient(#fff3c4,#ffe08a 45%,#ffd257 55%,#ffe597);border:1px solid #f0c850"></div><div class="a" style="left:27px;top:6.500px;width:8px;height:0;border-top:1px dotted #333"></div><div class="a" style="left:26.500px;top:-6px;width:0;height:13px;border-left:1px dotted #333"></div><svg style="left:36px;top:1px" width="10" height="11" viewBox="0 0 10 11"><path d="M.5.5h6l3 3v7h-9z" fill="#fdfefe" stroke="#5b8fd6" stroke-width=".9"/><path d="M6.500.5v3h3" fill="#4a86e0" stroke="#3a76d0" stroke-width=".5"/></svg><span style="left:50px">阻焊塞孔1</span><span style="left:107px;font-size:7px">P2</span><span style="left:143px">谢艳芳</span><span style="left:192px">李海燕</span><span style="left:242px">已上网</span><span style="left:341px">华丽梅</span></div>
<div class="tr" style="top:156.0px"><div class="a" style="left:27px;top:6.500px;width:8px;height:0;border-top:1px dotted #333"></div><div class="a" style="left:26.500px;top:-6px;width:0;height:13px;border-left:1px dotted #333"></div><svg style="left:36px;top:1px" width="10" height="11" viewBox="0 0 10 11"><path d="M.5.5h6l3 3v7h-9z" fill="#fdfefe" stroke="#5b8fd6" stroke-width=".9"/><path d="M6.500.5v3h3" fill="#4a86e0" stroke="#3a76d0" stroke-width=".5"/></svg><span style="left:50px">丝印1</span><span style="left:107px;font-size:7px">P2</span><span style="left:143px">谢艳芳</span><span style="left:192px">李海燕</span><span style="left:242px">已上网</span><span style="left:341px">华丽梅</span></div>
<div class="tr" style="top:168.6px"><div class="a" style="left:27px;top:6.500px;width:8px;height:0;border-top:1px dotted #333"></div><div class="a" style="left:26.500px;top:-6px;width:0;height:13px;border-left:1px dotted #333"></div><svg style="left:36px;top:1px" width="10" height="11" viewBox="0 0 10 11"><path d="M.5.5h6l3 3v7h-9z" fill="#fdfefe" stroke="#5b8fd6" stroke-width=".9"/><path d="M6.500.5v3h3" fill="#4a86e0" stroke="#3a76d0" stroke-width=".5"/></svg><span style="left:50px">预烘1</span><span style="left:107px;font-size:7px">P2</span><span style="left:143px">谢艳芳</span><span style="left:192px">李海燕</span><span style="left:242px">已上网</span><span style="left:341px">华丽梅</span></div>
<div class="tr" style="top:181.0px"><div class="a" style="left:27px;top:6.500px;width:8px;height:0;border-top:1px dotted #333"></div><div class="a" style="left:26.500px;top:-6px;width:0;height:13px;border-left:1px dotted #333"></div><svg style="left:36px;top:1px" width="10" height="11" viewBox="0 0 10 11"><path d="M.5.5h6l3 3v7h-9z" fill="#fdfefe" stroke="#5b8fd6" stroke-width=".9"/><path d="M6.500.5v3h3" fill="#4a86e0" stroke="#3a76d0" stroke-width=".5"/></svg><span style="left:50px">曝光1</span><span style="left:107px;font-size:7px">P2</span><span style="left:143px">谢艳芳</span><span style="left:192px">李海燕</span><span style="left:242px">已上网</span><span style="left:341px">华丽梅</span></div>
<div class="tr" style="top:194.0px"><div class="a" style="left:27px;top:6.500px;width:8px;height:0;border-top:1px dotted #333"></div><div class="a" style="left:26.500px;top:-6px;width:0;height:13px;border-left:1px dotted #333"></div><svg style="left:36px;top:1px" width="10" height="11" viewBox="0 0 10 11"><path d="M.5.5h6l3 3v7h-9z" fill="#fdfefe" stroke="#5b8fd6" stroke-width=".9"/><path d="M6.500.5v3h3" fill="#4a86e0" stroke="#3a76d0" stroke-width=".5"/></svg><span style="left:50px">显影1</span><span style="left:107px;font-size:7px">P2</span><span style="left:143px">谢艳芳</span><span style="left:192px">李海燕</span><span style="left:242px">已上网</span><span style="left:341px">华丽梅</span></div>
<div class="tr" style="top:206.0px"><div class="a" style="left:27px;top:6.500px;width:8px;height:0;border-top:1px dotted #333"></div><div class="a" style="left:26.500px;top:-6px;width:0;height:13px;border-left:1px dotted #333"></div><svg style="left:36px;top:1px" width="10" height="11" viewBox="0 0 10 11"><path d="M.5.5h6l3 3v7h-9z" fill="#fdfefe" stroke="#5b8fd6" stroke-width=".9"/><path d="M6.500.5v3h3" fill="#4a86e0" stroke="#3a76d0" stroke-width=".5"/></svg><span style="left:50px">终固化1</span><span style="left:107px;font-size:7px">P2</span><span style="left:143px">谢艳芳</span><span style="left:192px">李海燕</span><span style="left:242px">已上网</span><span style="left:341px">华丽梅</span></div>
<div class="tr" style="top:218.5px"><div class="a" style="left:13.500px;top:4px;width:5.500px;height:5.500px;border:1px solid #888;background:#fff"></div><div class="a" style="left:15px;top:6.300px;width:2.500px;height:1px;background:#222"></div><div class="a" style="left:19px;top:6.500px;width:5px;height:0;border-top:1px dotted #333"></div><svg style="left:25px;top:1px" width="11" height="10" viewBox="0 0 11 10"><path d="M.5 1.500h4l1 1.500h5v6.500H.5z" fill="#ffbe0a" stroke="#c9930a" stroke-width=".7"/><path d="M.5 9.500l1.500-5h8.500L10.500 9.500z" fill="#ffe27a" stroke="#d9a31a" stroke-width=".5"/></svg><span style="left:39px">沉金</span><span style="left:107px;font-size:7px">P2</span><span style="left:143px">谢艳芳</span><span style="left:192px">李海燕</span><span style="left:242px">已上网</span><span style="left:341px">华丽梅</span></div>
<div class="tr" style="top:231.0px"><div class="a" style="left:27px;top:6.500px;width:8px;height:0;border-top:1px dotted #333"></div><div class="a" style="left:26.500px;top:-6px;width:0;height:13px;border-left:1px dotted #333"></div><svg style="left:36px;top:1px" width="10" height="11" viewBox="0 0 10 11"><path d="M.5.5h6l3 3v7h-9z" fill="#fdfefe" stroke="#5b8fd6" stroke-width=".9"/><path d="M6.500.5v3h3" fill="#4a86e0" stroke="#3a76d0" stroke-width=".5"/></svg><span style="left:50px">喷砂</span><span style="left:107px;font-size:7px">P2</span><span style="left:143px">谢艳芳</span><span style="left:192px">李海燕</span><span style="left:242px">已上网</span><span style="left:341px">华丽梅</span></div>
<div class="tr" style="top:243.8px"><div class="a" style="left:13.500px;top:4px;width:5.500px;height:5.500px;border:1px solid #888;background:#fff"></div><div class="a" style="left:15px;top:6.300px;width:2.500px;height:1px;background:#222"></div><div class="a" style="left:19px;top:6.500px;width:5px;height:0;border-top:1px dotted #333"></div><svg style="left:25px;top:1px" width="11" height="10" viewBox="0 0 11 10"><path d="M.5 1.500h4l1 1.500h5v6.500H.5z" fill="#ffbe0a" stroke="#c9930a" stroke-width=".7"/><path d="M.5 9.500l1.500-5h8.500L10.500 9.500z" fill="#ffe27a" stroke="#d9a31a" stroke-width=".5"/></svg><span style="left:39px">外层干膜2</span><span style="left:107px;font-size:7px">P2</span><span style="left:143px">谢艳芳</span><span style="left:192px">李海燕</span><span style="left:242px">已上网</span><span style="left:341px">华丽梅</span></div>
<div class="tr" style="top:256.0px"><div class="a" style="left:27px;top:6.500px;width:8px;height:0;border-top:1px dotted #333"></div><div class="a" style="left:26.500px;top:-6px;width:0;height:13px;border-left:1px dotted #333"></div><svg style="left:36px;top:1px" width="10" height="11" viewBox="0 0 10 11"><path d="M.5.5h6l3 3v7h-9z" fill="#fdfefe" stroke="#5b8fd6" stroke-width=".9"/><path d="M6.500.5v3h3" fill="#4a86e0" stroke="#3a76d0" stroke-width=".5"/></svg><span style="left:50px">外层前处理2</span><span style="left:107px;font-size:7px">P2</span><span style="left:143px">谢艳芳</span><span style="left:192px">李海燕</span><span style="left:242px">已上网</span><span style="left:341px">华丽梅</span></div>
<div class="tr" style="top:268.8px"><div class="a" style="left:27px;top:6.500px;width:8px;height:0;border-top:1px dotted #333"></div><div class="a" style="left:26.500px;top:-6px;width:0;height:13px;border-left:1px dotted #333"></div><svg style="left:36px;top:1px" width="10" height="11" viewBox="0 0 10 11"><path d="M.5.5h6l3 3v7h-9z" fill="#fdfefe" stroke="#5b8fd6" stroke-width=".9"/><path d="M6.500.5v3h3" fill="#4a86e0" stroke="#3a76d0" stroke-width=".5"/></svg><span style="left:50px">贴膜2</span><span style="left:107px;font-size:7px">P2</span><span style="left:143px">谢艳芳</span><span style="left:192px">李海燕</span><span style="left:242px">已上网</span><span style="left:341px">华丽梅</span></div>
<div class="tr" style="top:281.4px"><div class="a" style="left:27px;top:6.500px;width:8px;height:0;border-top:1px dotted #333"></div><div class="a" style="left:26.500px;top:-6px;width:0;height:13px;border-left:1px dotted #333"></div><svg style="left:36px;top:1px" width="10" height="11" viewBox="0 0 10 11"><path d="M.5.5h6l3 3v7h-9z" fill="#fdfefe" stroke="#5b8fd6" stroke-width=".9"/><path d="M6.500.5v3h3" fill="#4a86e0" stroke="#3a76d0" stroke-width=".5"/></svg><span style="left:50px">曝光2</span><span style="left:107px;font-size:7px">P2</span><span style="left:143px">谢艳芳</span><span style="left:192px">李海燕</span><span style="left:242px">已上网</span><span style="left:341px">华丽梅</span></div>
<div class="tr" style="top:294.0px"><div class="a" style="left:27px;top:6.500px;width:8px;height:0;border-top:1px dotted #333"></div><div class="a" style="left:26.500px;top:-6px;width:0;height:13px;border-left:1px dotted #333"></div><svg style="left:36px;top:1px" width="10" height="11" viewBox="0 0 10 11"><path d="M.5.5h6l3 3v7h-9z" fill="#fdfefe" stroke="#5b8fd6" stroke-width=".9"/><path d="M6.500.5v3h3" fill="#4a86e0" stroke="#3a76d0" stroke-width=".5"/></svg><span style="left:50px">显影2</span><span style="left:107px;font-size:7px">P2</span><span style="left:143px">谢艳芳</span><span style="left:192px">李海燕</span><span style="left:242px">已上网</span><span style="left:341px">华丽梅</span></div>
<div class="tr" style="top:306.7px"><div class="a" style="left:13.500px;top:4px;width:5.500px;height:5.500px;border:1px solid #888;background:#fff"></div><div class="a" style="left:15px;top:6.300px;width:2.500px;height:1px;background:#222"></div><div class="a" style="left:19px;top:6.500px;width:5px;height:0;border-top:1px dotted #333"></div><svg style="left:25px;top:1px" width="11" height="10" viewBox="0 0 11 10"><path d="M.5 1.500h4l1 1.500h5v6.500H.5z" fill="#ffbe0a" stroke="#c9930a" stroke-width=".7"/><path d="M.5 9.500l1.500-5h8.500L10.500 9.500z" fill="#ffe27a" stroke="#d9a31a" stroke-width=".5"/></svg><span style="left:39px">图镀铜镍金</span><span style="left:107px;font-size:7px">P2</span><span style="left:143px">谢艳芳</span><span style="left:192px">李海燕</span><span style="left:242px">已上网</span><span style="left:341px">华丽梅</span></div>
<div class="tr" style="top:319.0px"><div class="a" style="left:27px;top:6.500px;width:8px;height:0;border-top:1px dotted #333"></div><div class="a" style="left:26.500px;top:-6px;width:0;height:13px;border-left:1px dotted #333"></div><svg style="left:36px;top:1px" width="10" height="11" viewBox="0 0 10 11"><path d="M.5.5h6l3 3v7h-9z" fill="#fdfefe" stroke="#5b8fd6" stroke-width=".9"/><path d="M6.500.5v3h3" fill="#4a86e0" stroke="#3a76d0" stroke-width=".5"/></svg><span style="left:50px">镀镍金</span><span style="left:107px;font-size:7px">P2</span><span style="left:143px">谢艳芳</span><span style="left:192px">李海燕</span><span style="left:242px">已上网</span><span style="left:341px">华丽梅</span></div>
<div class="tr" style="top:331.7px"><div class="a" style="left:27px;top:6.500px;width:8px;height:0;border-top:1px dotted #333"></div><div class="a" style="left:26.500px;top:-6px;width:0;height:13px;border-left:1px dotted #333"></div><svg style="left:36px;top:1px" width="10" height="11" viewBox="0 0 10 11"><path d="M.5.5h6l3 3v7h-9z" fill="#fdfefe" stroke="#5b8fd6" stroke-width=".9"/><path d="M6.500.5v3h3" fill="#4a86e0" stroke="#3a76d0" stroke-width=".5"/></svg><span style="left:50px">水洗烘干</span><span style="left:107px;font-size:7px">P2</span><span style="left:143px">谢艳芳</span><span style="left:192px">李海燕</span><span style="left:242px">已上网</span><span style="left:341px">华丽梅</span></div>
<div class="tr" style="top:344.3px"><div class="a" style="left:13.500px;top:4px;width:5.500px;height:5.500px;border:1px solid #888;background:#fff"></div><div class="a" style="left:15px;top:6.300px;width:2.500px;height:1px;background:#222"></div><div class="a" style="left:19px;top:6.500px;width:5px;height:0;border-top:1px dotted #333"></div><svg style="left:25px;top:1px" width="11" height="10" viewBox="0 0 11 10"><path d="M.5 1.500h4l1 1.500h5v6.500H.5z" fill="#ffbe0a" stroke="#c9930a" stroke-width=".7"/><path d="M.5 9.500l1.500-5h8.500L10.500 9.500z" fill="#ffe27a" stroke="#d9a31a" stroke-width=".5"/></svg><span style="left:39px">电镀硬金</span><span style="left:107px;font-size:7px">P2</span><span style="left:143px">谢艳芳</span><span style="left:192px">李海燕</span><span style="left:242px">已上网</span><span style="left:341px">华丽梅</span></div>
</div>
<div class="a" style="left:650px;top:98px;width:11px;height:359px;background:#f2f2f2;border-left:1px solid #ddd"></div>
<div class="a" style="left:651px;top:250px;width:10px;height:108px;background:linear-gradient(90deg,#fafafa,#e6e6e6);border:1px solid #c4c4c4;border-radius:1px"></div>
<div class="a" style="left:654px;top:301px;width:5px;height:1px;background:#555"></div><div class="a" style="left:654px;top:303px;width:5px;height:1px;background:#555"></div>
<div class="a" style="left:661px;top:73px;width:7px;height:384px;background:linear-gradient(90deg,#8ea0b8,#eef3fa 30%,#dfe8f4 70%,#6b8ec8)"></div>
<div class="a" style="left:668px;top:71px;width:436px;height:19px;background:linear-gradient(#f4f8fd,#c9ddf5);border-top:1px solid #9ab;border-bottom:1px solid #9db8df"></div>
<div class="a" style="left:668px;top:72px;width:45px;height:18px;background:linear-gradient(#3f86e0,#1f5fc0);border-radius:2px 2px 0 0"></div>
<div class="t" style="left:673px;top:77px;color:#fff;font-weight:bold">基本信息</div>
<div class="a" style="left:688px;top:87px;border-left:3px solid transparent;border-right:3px solid transparent;border-bottom:3px solid #fff"></div>
<div class="t" style="left:719px;top:78px;font-size:6.500px;color:#223">BOM</div>
<div class="a" style="left:668px;top:90px;width:436px;height:367px;background:#e3edf9"></div>
<svg style="left:672px;top:91px" width="64" height="15" viewBox="0 0 64 15"><path d="M0 14.500L12 .5h50.500v14" fill="#f4f8fd" stroke="#6d8fc4"/></svg>
<div class="t" style="left:692px;top:95px;font-weight:bold;color:#223">基本参数</div>
<div class="a" style="left:668px;top:105px;width:250px;height:2px;background:#4f7fc8"></div>
<div class="a" style="left:669px;top:107px;width:247px;height:352px;background:#fff;border:1px solid #6d8fc4"></div>
<div class="a" style="left:670px;top:108px;width:244px;height:22px;background:linear-gradient(#fbfcfe,#e3ebf6);border-bottom:1px solid #b8c6d8"></div>
<div class="a" style="left:691.6px;top:108px;width:1px;height:211px;background:#c5d2e4"></div>
<div class="a" style="left:793.7px;top:108px;width:1px;height:211px;background:#c5d2e4"></div>
<div class="a" style="left:872.6px;top:108px;width:1px;height:211px;background:#c5d2e4"></div>
<div class="a" style="left:912.8px;top:108px;width:1px;height:211px;background:#c5d2e4"></div>
<svg style="left:683px;top:121px" width="8" height="8" viewBox="0 0 8 8"><path d="M7.500 0v7.500H0z" fill="#3a7be0"/></svg>
<div class="t" style="left:735px;top:115px">项目</div><div class="t" style="left:825px;top:115px">参数</div><div class="t" style="left:884px;top:115px">单位</div>
<div class="gr" style="top:130.3px;background:#dce8f8;border-bottom:1px solid #fff"><div class="a" style="left:0;top:0;width:22px;height:14px;background:#d9e5f6;border-right:1px solid #b4c6e0"></div><div class="a" style="left:22px;top:0;width:102px;height:14px;background:#a9c9f0"></div><div class="a" style="left:3px;top:4px;border-top:2.500px solid transparent;border-bottom:2.500px solid transparent;border-left:3px solid #222"></div><div class="a" style="left:124px;top:0;width:79px;height:14px;background:#fff"></div><span style="left:23px">阻焊塞孔程序1</span><span style="left:125px;font-size:7px;">ca00103da0.svia</span><span style="left:204px;font-size:7px"></span></div>
<div class="gr" style="top:144.9px;background:#f0f0f0;border-bottom:1px solid #fff"><div class="a" style="left:0;top:0;width:22px;height:14px;background:#d9e5f6;border-right:1px solid #b4c6e0"></div><span style="left:23px">阻焊塞孔程序2</span><span style="left:125px;font-size:7px;">ca00103da0.svia</span><span style="left:204px;font-size:7px"></span></div>
<div class="gr" style="top:159.4px;background:#dce8f8;border-bottom:1px solid #fff"><div class="a" style="left:0;top:0;width:22px;height:14px;background:#d9e5f6;border-right:1px solid #b4c6e0"></div><div class="a" style="left:124px;top:0;width:79px;height:14px;background:#fff"></div><span style="left:23px">塞孔最小孔径</span><span style="left:125px;font-size:7px;">0.400</span><span style="left:204px;font-size:7px">mm</span></div>
<div class="gr" style="top:174.0px;background:#f0f0f0;border-bottom:1px solid #fff"><div class="a" style="left:0;top:0;width:22px;height:14px;background:#d9e5f6;border-right:1px solid #b4c6e0"></div><span style="left:23px">塞孔最大孔径</span><span style="left:125px;font-size:7px;">0.400</span><span style="left:204px;font-size:7px">mm</span></div>
<div class="gr" style="top:188.5px;background:#dce8f8;border-bottom:1px solid #fff"><div class="a" style="left:0;top:0;width:22px;height:14px;background:#d9e5f6;border-right:1px solid #b4c6e0"></div><div class="a" style="left:124px;top:0;width:79px;height:14px;background:#fff"></div><span style="left:23px">塞孔深度</span><span style="left:125px;font-size:7px;">>80%</span><span style="left:204px;font-size:7px"></span></div>
<div class="gr" style="top:203.1px;background:#f0f0f0;border-bottom:1px solid #fff"><div class="a" style="left:0;top:0;width:22px;height:14px;background:#d9e5f6;border-right:1px solid #b4c6e0"></div><span style="left:23px">阻焊塞孔面</span><span style="left:125px;font-size:7px;">CS+SS</span><span style="left:204px;font-size:7px"></span></div>
<div class="gr" style="top:217.7px;background:#dce8f8;border-bottom:1px solid #fff"><div class="a" style="left:0;top:0;width:22px;height:14px;background:#d9e5f6;border-right:1px solid #b4c6e0"></div><div class="a" style="left:124px;top:0;width:79px;height:14px;background:#fff"></div><span style="left:23px">是否为盘中孔阻焊塞孔</span><span style="left:125px;font-size:7px;">Y</span><span style="left:204px;font-size:7px"></span></div>
<div class="gr" style="top:232.2px;background:#f0f0f0;border-bottom:1px solid #fff"><div class="a" style="left:0;top:0;width:22px;height:14px;background:#d9e5f6;border-right:1px solid #b4c6e0"></div><span style="left:23px">控深盲孔是否阻焊塞孔制作</span><span style="left:125px;font-size:7px;">N</span><span style="left:204px;font-size:7px"></span></div>
<div class="gr" style="top:246.8px;background:#dce8f8;border-bottom:1px solid #fff"><div class="a" style="left:0;top:0;width:22px;height:14px;background:#d9e5f6;border-right:1px solid #b4c6e0"></div><div class="a" style="left:124px;top:0;width:79px;height:14px;background:#fff"></div><span style="left:23px">过孔工艺</span><span style="left:125px;">阻焊塞孔</span><span style="left:204px;font-size:7px"></span></div>
<div class="gr" style="top:261.3px;background:#f0f0f0;border-bottom:1px solid #fff"><div class="a" style="left:0;top:0;width:22px;height:14px;background:#d9e5f6;border-right:1px solid #b4c6e0"></div><span style="left:23px">不允许有绿油塞</span><span style="left:125px;font-size:7px;">N</span><span style="left:204px;font-size:7px"></span></div>
<div class="gr" style="top:275.9px;background:#dce8f8;border-bottom:1px solid #fff"><div class="a" style="left:0;top:0;width:22px;height:14px;background:#d9e5f6;border-right:1px solid #b4c6e0"></div><div class="a" style="left:124px;top:0;width:79px;height:14px;background:#fff"></div><span style="left:23px">不允许假性露铜</span><span style="left:125px;font-size:7px;">/</span><span style="left:204px;font-size:7px"></span></div>
<div class="gr" style="top:290.5px;background:#f0f0f0;border-bottom:1px solid #fff"><div class="a" style="left:0;top:0;width:22px;height:14px;background:#d9e5f6;border-right:1px solid #b4c6e0"></div><span style="left:23px">是否背钻孔阻焊塞孔制作</span><span style="left:125px;font-size:7px;">N</span><span style="left:204px;font-size:7px"></span></div>
<div class="gr" style="top:305.0px;background:#dce8f8;border-bottom:1px solid #fff"><div class="a" style="left:0;top:0;width:22px;height:14px;background:#d9e5f6;border-right:1px solid #b4c6e0"></div><div class="a" style="left:124px;top:0;width:79px;height:14px;background:#fff"></div><span style="left:23px">单面开窗不能曝光点</span><span style="left:125px;font-size:7px;">CS</span><span style="left:204px;font-size:7px"></span></div>
<div class="a" style="left:915px;top:90px;width:6px;height:367px;background:linear-gradient(90deg,#5f86c8,#dfe8f4 40%,#eef3fa 70%,#8ea0b8)"></div>
<svg style="left:925px;top:91px" width="64" height="15" viewBox="0 0 64 15"><path d="M0 14.500L12 .5h50.500v14" fill="#f4f8fd" stroke="#6d8fc4"/></svg>
<div class="t" style="left:945px;top:95px;font-weight:bold;color:#223">工艺备注</div>
<div class="a" style="left:921px;top:105px;width:183px;height:2px;background:#4f7fc8"></div>
<div class="a" style="left:921px;top:107px;width:183px;height:350px;background:#f0f0f0"></div>
<div class="a" style="left:921px;top:107px;width:183px;height:15px;background:#f6f6f6;border-bottom:1px solid #e2e2e2"></div>
<div class="t" style="left:924px;top:111px">工艺备注</div><div class="t" style="left:1055px;top:111px">型号备注</div>
<div class="a" style="left:1042px;top:123px;width:9px;height:334px;background:#f7f7f7;border-left:1px solid #e0e0e0"></div>
<div class="t" style="left:1044px;top:127px;font-size:5px;color:#555">▲</div>
<div class="a" style="left:1052px;top:107px;width:1px;height:350px;background:#6d8fc4"></div>
</div></div>

</body></html>
